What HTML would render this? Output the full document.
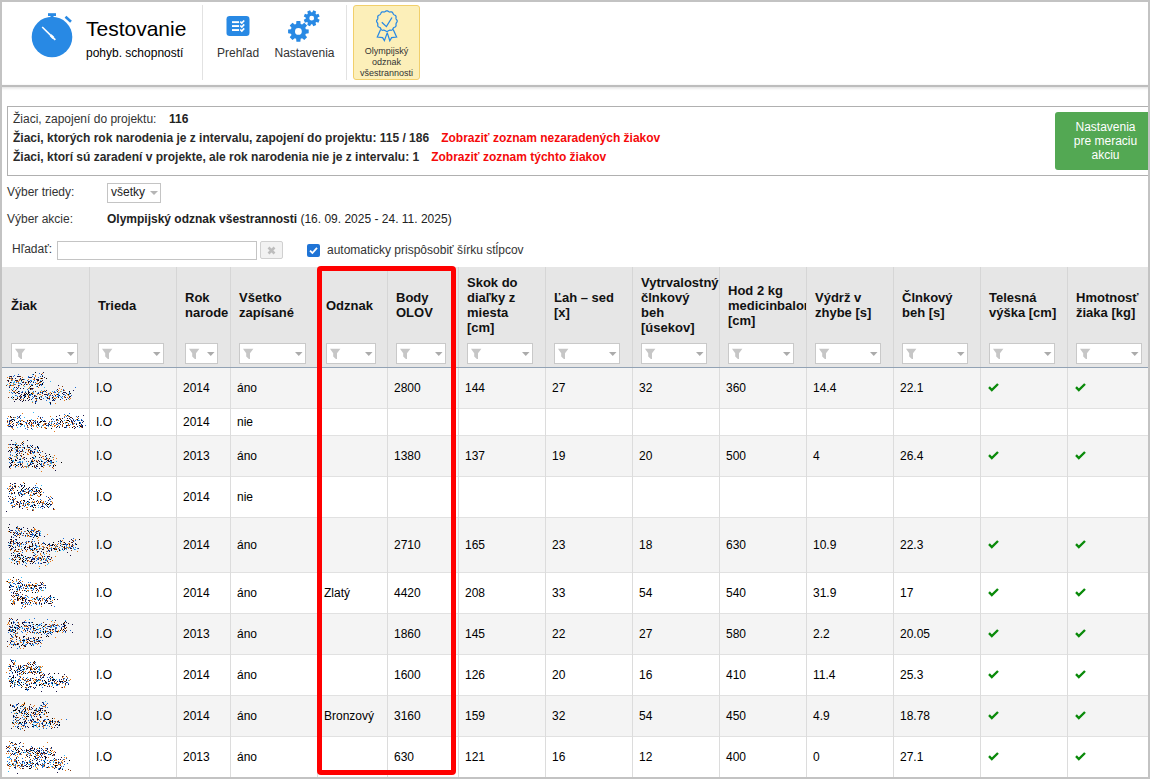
<!DOCTYPE html><html><head><meta charset="utf-8"><style>
*{box-sizing:border-box}
html,body{margin:0;padding:0;width:1150px;height:779px;overflow:hidden;background:#fff;font-family:"Liberation Sans", sans-serif;color:#333}
.a{position:absolute}
.t{position:absolute;white-space:nowrap}
</style></head><body>
<div class="a" style="left:0;top:0;width:1150px;height:85px;background:#fff"></div>
<div class="a" style="left:0;top:85px;width:1150px;height:2px;background:#bdbdbd;box-shadow:0 1px 3px rgba(0,0,0,0.18)"></div>
<svg class="a" style="left:28px;top:10px" width="50" height="50" viewBox="0 0 50 50">
<circle cx="24" cy="27" r="20.3" fill="#2889e4"/>
<rect x="20" y="3.2" width="8" height="2.8" fill="#2889e4"/>
<rect x="22.5" y="4" width="3" height="3" fill="#2889e4"/>
<path d="M37.5 6.8 L43 11.8" stroke="#2889e4" stroke-width="2.6"/>
<path d="M14.2 17 L25 27.6" stroke="#fff" stroke-width="1.6" stroke-linecap="butt"/>
<path d="M22.6 25.2 L25.4 28" stroke="#fff" stroke-width="2.6"/><path d="M25 27.6 L27.3 29.8" stroke="#fff" stroke-width="1.8"/>
</svg>
<div class="t" style="left:86px;top:16px;font-size:21px;color:#000;line-height:26px">Testovanie</div>
<div class="t" style="left:86px;top:45px;font-size:12px;color:#000;line-height:16px">pohyb. schopností</div>
<div class="a" style="left:202px;top:5px;width:1px;height:75px;background:#e2e2e2"></div>
<div class="a" style="left:346px;top:5px;width:1px;height:75px;background:#e2e2e2"></div>
<svg class="a" style="left:226px;top:16px" width="24" height="20" viewBox="0 0 24 20">
<rect x="0.5" y="0" width="23" height="20" rx="3.2" fill="#2889e4"/>
<rect x="6" y="5.2" width="7" height="1.9" fill="#fff"/>
<rect x="6" y="9.1" width="7" height="1.9" fill="#fff"/>
<rect x="6" y="13.1" width="7" height="1.9" fill="#fff"/>
<path d="M14.2 5.6l1.6 1.5 2.4-2.6 M14.2 9.5l1.6 1.5 2.4-2.6 M14.2 13.5l1.6 1.5 2.4-2.6" stroke="#fff" stroke-width="1.7" fill="none"/>
</svg>
<div class="t" style="left:217px;top:45px;font-size:12px;color:#333;line-height:16px">Prehľad</div>
<svg class="a" style="left:288px;top:9px" width="34" height="34" viewBox="0 0 34 34"><path fill-rule="evenodd" d="M17.86 20.14L20.71 20.43L20.71 24.37L17.86 24.66L17.28 26.08L19.08 28.30L16.30 31.08L14.08 29.28L12.66 29.86L12.37 32.71L8.43 32.71L8.14 29.86L6.72 29.28L4.50 31.08L1.72 28.30L3.52 26.08L2.94 24.66L0.09 24.37L0.09 20.43L2.94 20.14L3.52 18.72L1.72 16.50L4.50 13.72L6.72 15.52L8.14 14.94L8.43 12.09L12.37 12.09L12.66 14.94L14.08 15.52L16.30 13.72L19.08 16.50L17.28 18.72ZM13.80 22.40A3.4 3.4 0 1 0 7.00 22.40A3.4 3.4 0 1 0 13.80 22.40ZM29.67 9.79L31.63 10.84L30.47 13.65L28.34 13.01L27.51 13.84L28.15 15.97L25.34 17.13L24.29 15.17L23.11 15.17L22.06 17.13L19.25 15.97L19.89 13.84L19.06 13.01L16.93 13.65L15.77 10.84L17.73 9.79L17.73 8.61L15.77 7.56L16.93 4.75L19.06 5.39L19.89 4.56L19.25 2.43L22.06 1.27L23.11 3.23L24.29 3.23L25.34 1.27L28.15 2.43L27.51 4.56L28.34 5.39L30.47 4.75L31.63 7.56L29.67 8.61ZM26.10 9.20A2.4 2.4 0 1 0 21.30 9.20A2.4 2.4 0 1 0 26.10 9.20Z" fill="#2889e4"/></svg>
<div class="t" style="left:274.5px;top:45px;font-size:12px;color:#333;line-height:16px">Nastavenia</div>
<div class="a" style="left:353px;top:5px;width:67px;height:75px;background:#fcefb9;border:1px solid #f1cf6b;border-radius:3px"></div>
<svg class="a" style="left:372px;top:6px" width="30" height="38" viewBox="0 0 30 38">
<path d="M14.90 4.78L15.44 4.87L15.95 5.13L16.43 5.45L16.89 5.75L17.35 5.94L17.85 6.01L18.40 5.98L18.98 5.94L19.55 5.98L20.06 6.16L20.48 6.51L20.80 6.99L21.05 7.51L21.30 8.00L21.60 8.40L22.00 8.70L22.49 8.95L23.01 9.20L23.49 9.52L23.84 9.94L24.02 10.45L24.06 11.02L24.02 11.60L23.99 12.15L24.06 12.65L24.25 13.11L24.55 13.57L24.87 14.05L25.13 14.56L25.22 15.10L25.13 15.64L24.87 16.15L24.55 16.63L24.25 17.09L24.06 17.55L23.99 18.05L24.02 18.60L24.06 19.18L24.02 19.75L23.84 20.26L23.49 20.68L23.01 21.00L22.49 21.25L22.00 21.50L21.60 21.80L21.30 22.20L21.05 22.69L20.80 23.21L20.48 23.69L20.06 24.04L19.55 24.22L18.98 24.26L18.40 24.22L17.85 24.19L17.35 24.26L16.89 24.45L16.43 24.75L15.95 25.07L15.44 25.33L14.90 25.42L14.36 25.33L13.85 25.07L13.37 24.75L12.91 24.45L12.45 24.26L11.95 24.19L11.40 24.22L10.82 24.26L10.25 24.22L9.74 24.04L9.32 23.69L9.00 23.21L8.75 22.69L8.50 22.20L8.20 21.80L7.80 21.50L7.31 21.25L6.79 21.00L6.31 20.68L5.96 20.26L5.78 19.75L5.74 19.18L5.78 18.60L5.81 18.05L5.74 17.55L5.55 17.09L5.25 16.63L4.93 16.15L4.67 15.64L4.58 15.10L4.67 14.56L4.93 14.05L5.25 13.57L5.55 13.11L5.74 12.65L5.81 12.15L5.78 11.60L5.74 11.02L5.78 10.45L5.96 9.94L6.31 9.52L6.79 9.20L7.31 8.95L7.80 8.70L8.20 8.40L8.50 8.00L8.75 7.51L9.00 6.99L9.32 6.51L9.74 6.16L10.25 5.98L10.82 5.94L11.40 5.98L11.95 6.01L12.45 5.94L12.91 5.75L13.37 5.45L13.85 5.13L14.36 4.87L14.90 4.78Z" fill="none" stroke="#2889e4" stroke-width="1.25"/>
<path d="M9.8 16.3 L14.4 20.6 L20 11.5" fill="none" stroke="#2889e4" stroke-width="1.3"/>
<path d="M8.6 23.6 L5.3 31 L10.6 31.6 L12.4 34.6 L15.4 26.4 M21.2 23.6 L24.6 31 L19.6 31.6 L17.8 34.8 L15.2 26.6" fill="none" stroke="#2889e4" stroke-width="1.25" stroke-linejoin="miter"/>
</svg>
<div class="t" style="left:353px;top:46.3px;width:67px;text-align:center;font-size:9px;line-height:10.8px;color:#333;white-space:normal">Olympijský<br>odznak<br>všestrannosti</div>
<div class="a" style="left:7px;top:106px;width:1160px;height:70px;border:1px solid #b0b0b0"></div>
<div class="t" style="left:13px;top:110px;font-size:12px;line-height:19px;color:#333">Žiaci, zapojení do projektu:</div>
<div class="t" style="left:169px;top:110px;font-size:12px;line-height:19px;color:#222;font-weight:bold">116</div>
<div class="t" style="left:13px;top:129px;font-size:12px;line-height:19px;color:#2a2a2a;font-weight:bold">Žiaci, ktorých rok narodenia je z intervalu, zapojení do projektu: 115 / 186<span style="color:#f50a0a;margin-left:12px">Zobraziť zoznam nezaradených žiakov</span></div>
<div class="t" style="left:13px;top:148px;font-size:12px;line-height:19px;color:#2a2a2a;font-weight:bold">Žiaci, ktorí sú zaradení v projekte, ale rok narodenia nie je z intervalu: 1<span style="color:#f50a0a;margin-left:12px">Zobraziť zoznam týchto žiakov</span></div>
<div class="a" style="left:1055px;top:112px;width:101px;height:58px;background:#53a853;border-radius:3px"></div>
<div class="t" style="left:1055px;top:119.8px;width:101px;text-align:center;font-size:12px;line-height:14px;color:#fff">Nastavenia<br>pre meraciu<br>akciu</div>
<div class="t" style="left:7px;top:184px;font-size:12px;line-height:16px;color:#333">Výber triedy:</div>
<div class="a" style="left:107px;top:183px;width:54px;height:20px;border:1px solid #c4c4c4;background:#fff"></div>
<div class="t" style="left:111px;top:184px;font-size:12px;line-height:16px;color:#222">všetky</div>
<svg class="a" style="left:150px;top:191px" width="9" height="5"><path d="M0 0H8L4 4Z" fill="#b5b5b5"/></svg>
<div class="t" style="left:7px;top:211px;font-size:12px;line-height:16px;color:#333">Výber akcie:</div>
<div class="t" style="left:107px;top:211px;font-size:12px;line-height:16px;color:#222"><b>Olympijský odznak všestrannosti</b> (16. 09. 2025 - 24. 11. 2025)</div>
<div class="t" style="left:12px;top:241px;font-size:12px;line-height:16px;color:#333">Hľadať:</div>
<div class="a" style="left:57px;top:241px;width:200px;height:19px;border:1px solid #c4c4c4;background:#fff"></div>
<div class="a" style="left:260px;top:241px;width:23px;height:18px;border:1px solid #d0d0d0;background:#f2f2f2;border-radius:2px"></div>
<svg class="a" style="left:267px;top:246px" width="9" height="9"><path d="M1.5 1.5L7.5 7.5M7.5 1.5L1.5 7.5" stroke="#bdbdbd" stroke-width="2.6"/></svg>
<svg class="a" style="left:307px;top:244px" width="13" height="13"><rect width="13" height="13" rx="2" fill="#1f74d6"/><path d="M3 6.6L5.4 9L10 3.8" stroke="#fff" stroke-width="1.8" fill="none"/></svg>
<div class="t" style="left:327px;top:242px;font-size:12px;line-height:16px;color:#333">automaticky prispôsobiť šírku stĺpcov</div>
<div class="a" style="left:0;top:267px;width:1150px;height:100px;background:#e6e6e6"></div>
<div class="a" style="left:0;top:367px;width:1150px;height:1px;background:#92a2b4"></div>
<div class="a" style="left:0;top:368px;width:1150px;height:40px;background:#f4f4f4"></div>
<div class="a" style="left:0;top:408px;width:1150px;height:1px;background:#e1e1e1"></div>
<div class="a" style="left:0;top:409px;width:1150px;height:26px;background:#ffffff"></div>
<div class="a" style="left:0;top:435px;width:1150px;height:1px;background:#e1e1e1"></div>
<div class="a" style="left:0;top:436px;width:1150px;height:40px;background:#f4f4f4"></div>
<div class="a" style="left:0;top:476px;width:1150px;height:1px;background:#e1e1e1"></div>
<div class="a" style="left:0;top:477px;width:1150px;height:40px;background:#ffffff"></div>
<div class="a" style="left:0;top:517px;width:1150px;height:1px;background:#e1e1e1"></div>
<div class="a" style="left:0;top:518px;width:1150px;height:54px;background:#f4f4f4"></div>
<div class="a" style="left:0;top:572px;width:1150px;height:1px;background:#e1e1e1"></div>
<div class="a" style="left:0;top:573px;width:1150px;height:40px;background:#ffffff"></div>
<div class="a" style="left:0;top:613px;width:1150px;height:1px;background:#e1e1e1"></div>
<div class="a" style="left:0;top:614px;width:1150px;height:40px;background:#f4f4f4"></div>
<div class="a" style="left:0;top:654px;width:1150px;height:1px;background:#e1e1e1"></div>
<div class="a" style="left:0;top:655px;width:1150px;height:40px;background:#ffffff"></div>
<div class="a" style="left:0;top:695px;width:1150px;height:1px;background:#e1e1e1"></div>
<div class="a" style="left:0;top:696px;width:1150px;height:40px;background:#f4f4f4"></div>
<div class="a" style="left:0;top:736px;width:1150px;height:1px;background:#e1e1e1"></div>
<div class="a" style="left:0;top:737px;width:1150px;height:40px;background:#ffffff"></div>
<div class="a" style="left:89px;top:267px;width:1px;height:100px;background:#d6d6d6"></div>
<div class="a" style="left:89px;top:368px;width:1px;height:411px;background:#dcdcdc"></div>
<div class="a" style="left:176px;top:267px;width:1px;height:100px;background:#d6d6d6"></div>
<div class="a" style="left:176px;top:368px;width:1px;height:411px;background:#dcdcdc"></div>
<div class="a" style="left:230px;top:267px;width:1px;height:100px;background:#d6d6d6"></div>
<div class="a" style="left:230px;top:368px;width:1px;height:411px;background:#dcdcdc"></div>
<div class="a" style="left:317px;top:267px;width:1px;height:100px;background:#d6d6d6"></div>
<div class="a" style="left:317px;top:368px;width:1px;height:411px;background:#dcdcdc"></div>
<div class="a" style="left:387px;top:267px;width:1px;height:100px;background:#d6d6d6"></div>
<div class="a" style="left:387px;top:368px;width:1px;height:411px;background:#dcdcdc"></div>
<div class="a" style="left:458px;top:267px;width:1px;height:100px;background:#d6d6d6"></div>
<div class="a" style="left:458px;top:368px;width:1px;height:411px;background:#dcdcdc"></div>
<div class="a" style="left:545px;top:267px;width:1px;height:100px;background:#d6d6d6"></div>
<div class="a" style="left:545px;top:368px;width:1px;height:411px;background:#dcdcdc"></div>
<div class="a" style="left:632px;top:267px;width:1px;height:100px;background:#d6d6d6"></div>
<div class="a" style="left:632px;top:368px;width:1px;height:411px;background:#dcdcdc"></div>
<div class="a" style="left:719px;top:267px;width:1px;height:100px;background:#d6d6d6"></div>
<div class="a" style="left:719px;top:368px;width:1px;height:411px;background:#dcdcdc"></div>
<div class="a" style="left:806px;top:267px;width:1px;height:100px;background:#d6d6d6"></div>
<div class="a" style="left:806px;top:368px;width:1px;height:411px;background:#dcdcdc"></div>
<div class="a" style="left:893px;top:267px;width:1px;height:100px;background:#d6d6d6"></div>
<div class="a" style="left:893px;top:368px;width:1px;height:411px;background:#dcdcdc"></div>
<div class="a" style="left:980px;top:267px;width:1px;height:100px;background:#d6d6d6"></div>
<div class="a" style="left:980px;top:368px;width:1px;height:411px;background:#dcdcdc"></div>
<div class="a" style="left:1067px;top:267px;width:1px;height:100px;background:#d6d6d6"></div>
<div class="a" style="left:1067px;top:368px;width:1px;height:411px;background:#dcdcdc"></div>
<div class="a" style="left:2px;top:267px;width:87px;height:100px;overflow:hidden"><div class="t" style="left:9px;top:30.5px;font-size:13px;line-height:15px;font-weight:bold;color:#111">Žiak</div></div>
<div class="a" style="left:11px;top:343px;width:67px;height:21px;border:1px solid #c9c9c9;background:#fff"></div>
<svg style="position:absolute;left:15px;top:348px" width="11" height="12" viewBox="0 0 11 12"><path d="M0 0.8H10.4L7 5.2V11H5.9L3.2 8.4V5.2Z" fill="#c6c6c6"/></svg>
<svg class="a" style="left:67px;top:352px" width="8" height="5"><path d="M0 0H7.5L3.75 4Z" fill="#ababab"/></svg>
<div class="a" style="left:90px;top:267px;width:86px;height:100px;overflow:hidden"><div class="t" style="left:8px;top:30.5px;font-size:13px;line-height:15px;font-weight:bold;color:#111">Trieda</div></div>
<div class="a" style="left:98px;top:343px;width:66px;height:21px;border:1px solid #c9c9c9;background:#fff"></div>
<svg style="position:absolute;left:102px;top:348px" width="11" height="12" viewBox="0 0 11 12"><path d="M0 0.8H10.4L7 5.2V11H5.9L3.2 8.4V5.2Z" fill="#c6c6c6"/></svg>
<svg class="a" style="left:153px;top:352px" width="8" height="5"><path d="M0 0H7.5L3.75 4Z" fill="#ababab"/></svg>
<div class="a" style="left:177px;top:267px;width:53px;height:100px;overflow:hidden"><div class="t" style="left:8px;top:23.0px;font-size:13px;line-height:15px;font-weight:bold;color:#111">Rok<br>narode</div></div>
<div class="a" style="left:185px;top:343px;width:33px;height:21px;border:1px solid #c9c9c9;background:#fff"></div>
<svg style="position:absolute;left:189px;top:348px" width="11" height="12" viewBox="0 0 11 12"><path d="M0 0.8H10.4L7 5.2V11H5.9L3.2 8.4V5.2Z" fill="#c6c6c6"/></svg>
<svg class="a" style="left:207px;top:352px" width="8" height="5"><path d="M0 0H7.5L3.75 4Z" fill="#ababab"/></svg>
<div class="a" style="left:231px;top:267px;width:86px;height:100px;overflow:hidden"><div class="t" style="left:8px;top:23.0px;font-size:13px;line-height:15px;font-weight:bold;color:#111">Všetko<br>zapísané</div></div>
<div class="a" style="left:239px;top:343px;width:67px;height:21px;border:1px solid #c9c9c9;background:#fff"></div>
<svg style="position:absolute;left:243px;top:348px" width="11" height="12" viewBox="0 0 11 12"><path d="M0 0.8H10.4L7 5.2V11H5.9L3.2 8.4V5.2Z" fill="#c6c6c6"/></svg>
<svg class="a" style="left:295px;top:352px" width="8" height="5"><path d="M0 0H7.5L3.75 4Z" fill="#ababab"/></svg>
<div class="a" style="left:318px;top:267px;width:69px;height:100px;overflow:hidden"><div class="t" style="left:8px;top:30.5px;font-size:13px;line-height:15px;font-weight:bold;color:#111">Odznak</div></div>
<div class="a" style="left:326px;top:343px;width:50px;height:21px;border:1px solid #c9c9c9;background:#fff"></div>
<svg style="position:absolute;left:330px;top:348px" width="11" height="12" viewBox="0 0 11 12"><path d="M0 0.8H10.4L7 5.2V11H5.9L3.2 8.4V5.2Z" fill="#c6c6c6"/></svg>
<svg class="a" style="left:365px;top:352px" width="8" height="5"><path d="M0 0H7.5L3.75 4Z" fill="#ababab"/></svg>
<div class="a" style="left:388px;top:267px;width:70px;height:100px;overflow:hidden"><div class="t" style="left:8px;top:23.0px;font-size:13px;line-height:15px;font-weight:bold;color:#111">Body<br>OLOV</div></div>
<div class="a" style="left:396px;top:343px;width:50px;height:21px;border:1px solid #c9c9c9;background:#fff"></div>
<svg style="position:absolute;left:400px;top:348px" width="11" height="12" viewBox="0 0 11 12"><path d="M0 0.8H10.4L7 5.2V11H5.9L3.2 8.4V5.2Z" fill="#c6c6c6"/></svg>
<svg class="a" style="left:435px;top:352px" width="8" height="5"><path d="M0 0H7.5L3.75 4Z" fill="#ababab"/></svg>
<div class="a" style="left:459px;top:267px;width:86px;height:100px;overflow:hidden"><div class="t" style="left:8px;top:8.0px;font-size:13px;line-height:15px;font-weight:bold;color:#111">Skok do<br>diaľky z<br>miesta<br>[cm]</div></div>
<div class="a" style="left:467px;top:343px;width:66px;height:21px;border:1px solid #c9c9c9;background:#fff"></div>
<svg style="position:absolute;left:471px;top:348px" width="11" height="12" viewBox="0 0 11 12"><path d="M0 0.8H10.4L7 5.2V11H5.9L3.2 8.4V5.2Z" fill="#c6c6c6"/></svg>
<svg class="a" style="left:522px;top:352px" width="8" height="5"><path d="M0 0H7.5L3.75 4Z" fill="#ababab"/></svg>
<div class="a" style="left:546px;top:267px;width:86px;height:100px;overflow:hidden"><div class="t" style="left:8px;top:23.0px;font-size:13px;line-height:15px;font-weight:bold;color:#111">Ľah – sed<br>[x]</div></div>
<div class="a" style="left:554px;top:343px;width:66px;height:21px;border:1px solid #c9c9c9;background:#fff"></div>
<svg style="position:absolute;left:558px;top:348px" width="11" height="12" viewBox="0 0 11 12"><path d="M0 0.8H10.4L7 5.2V11H5.9L3.2 8.4V5.2Z" fill="#c6c6c6"/></svg>
<svg class="a" style="left:609px;top:352px" width="8" height="5"><path d="M0 0H7.5L3.75 4Z" fill="#ababab"/></svg>
<div class="a" style="left:633px;top:267px;width:86px;height:100px;overflow:hidden"><div class="t" style="left:8px;top:8.0px;font-size:13px;line-height:15px;font-weight:bold;color:#111">Vytrvalostný<br>člnkový<br>beh<br>[úsekov]</div></div>
<div class="a" style="left:641px;top:343px;width:66px;height:21px;border:1px solid #c9c9c9;background:#fff"></div>
<svg style="position:absolute;left:645px;top:348px" width="11" height="12" viewBox="0 0 11 12"><path d="M0 0.8H10.4L7 5.2V11H5.9L3.2 8.4V5.2Z" fill="#c6c6c6"/></svg>
<svg class="a" style="left:696px;top:352px" width="8" height="5"><path d="M0 0H7.5L3.75 4Z" fill="#ababab"/></svg>
<div class="a" style="left:720px;top:267px;width:86px;height:100px;overflow:hidden"><div class="t" style="left:8px;top:15.5px;font-size:13px;line-height:15px;font-weight:bold;color:#111">Hod 2 kg<br>medicinbalom<br>[cm]</div></div>
<div class="a" style="left:728px;top:343px;width:66px;height:21px;border:1px solid #c9c9c9;background:#fff"></div>
<svg style="position:absolute;left:732px;top:348px" width="11" height="12" viewBox="0 0 11 12"><path d="M0 0.8H10.4L7 5.2V11H5.9L3.2 8.4V5.2Z" fill="#c6c6c6"/></svg>
<svg class="a" style="left:783px;top:352px" width="8" height="5"><path d="M0 0H7.5L3.75 4Z" fill="#ababab"/></svg>
<div class="a" style="left:807px;top:267px;width:86px;height:100px;overflow:hidden"><div class="t" style="left:8px;top:23.0px;font-size:13px;line-height:15px;font-weight:bold;color:#111">Výdrž v<br>zhybe [s]</div></div>
<div class="a" style="left:815px;top:343px;width:66px;height:21px;border:1px solid #c9c9c9;background:#fff"></div>
<svg style="position:absolute;left:819px;top:348px" width="11" height="12" viewBox="0 0 11 12"><path d="M0 0.8H10.4L7 5.2V11H5.9L3.2 8.4V5.2Z" fill="#c6c6c6"/></svg>
<svg class="a" style="left:870px;top:352px" width="8" height="5"><path d="M0 0H7.5L3.75 4Z" fill="#ababab"/></svg>
<div class="a" style="left:894px;top:267px;width:86px;height:100px;overflow:hidden"><div class="t" style="left:8px;top:23.0px;font-size:13px;line-height:15px;font-weight:bold;color:#111">Člnkový<br>beh [s]</div></div>
<div class="a" style="left:902px;top:343px;width:66px;height:21px;border:1px solid #c9c9c9;background:#fff"></div>
<svg style="position:absolute;left:906px;top:348px" width="11" height="12" viewBox="0 0 11 12"><path d="M0 0.8H10.4L7 5.2V11H5.9L3.2 8.4V5.2Z" fill="#c6c6c6"/></svg>
<svg class="a" style="left:957px;top:352px" width="8" height="5"><path d="M0 0H7.5L3.75 4Z" fill="#ababab"/></svg>
<div class="a" style="left:981px;top:267px;width:86px;height:100px;overflow:hidden"><div class="t" style="left:8px;top:23.0px;font-size:13px;line-height:15px;font-weight:bold;color:#111">Telesná<br>výška [cm]</div></div>
<div class="a" style="left:989px;top:343px;width:66px;height:21px;border:1px solid #c9c9c9;background:#fff"></div>
<svg style="position:absolute;left:993px;top:348px" width="11" height="12" viewBox="0 0 11 12"><path d="M0 0.8H10.4L7 5.2V11H5.9L3.2 8.4V5.2Z" fill="#c6c6c6"/></svg>
<svg class="a" style="left:1044px;top:352px" width="8" height="5"><path d="M0 0H7.5L3.75 4Z" fill="#ababab"/></svg>
<div class="a" style="left:1068px;top:267px;width:86px;height:100px;overflow:hidden"><div class="t" style="left:8px;top:23.0px;font-size:13px;line-height:15px;font-weight:bold;color:#111">Hmotnosť<br>žiaka [kg]</div></div>
<div class="a" style="left:1076px;top:343px;width:66px;height:21px;border:1px solid #c9c9c9;background:#fff"></div>
<svg style="position:absolute;left:1080px;top:348px" width="11" height="12" viewBox="0 0 11 12"><path d="M0 0.8H10.4L7 5.2V11H5.9L3.2 8.4V5.2Z" fill="#c6c6c6"/></svg>
<svg class="a" style="left:1131px;top:352px" width="8" height="5"><path d="M0 0H7.5L3.75 4Z" fill="#ababab"/></svg>
<div class="t" style="left:96px;top:380.0px;font-size:12px;line-height:16px;color:#000">I.O</div>
<div class="t" style="left:183px;top:380.0px;font-size:12px;line-height:16px;color:#000">2014</div>
<div class="t" style="left:237px;top:380.0px;font-size:12px;line-height:16px;color:#000">áno</div>
<div class="t" style="left:394px;top:380.0px;font-size:12px;line-height:16px;color:#000">2800</div>
<div class="t" style="left:465px;top:380.0px;font-size:12px;line-height:16px;color:#000">144</div>
<div class="t" style="left:552px;top:380.0px;font-size:12px;line-height:16px;color:#000">27</div>
<div class="t" style="left:639px;top:380.0px;font-size:12px;line-height:16px;color:#000">32</div>
<div class="t" style="left:726px;top:380.0px;font-size:12px;line-height:16px;color:#000">360</div>
<div class="t" style="left:813px;top:380.0px;font-size:12px;line-height:16px;color:#000">14.4</div>
<div class="t" style="left:900px;top:380.0px;font-size:12px;line-height:16px;color:#000">22.1</div>
<svg class="a" style="left:988px;top:382.8px" width="11" height="9" viewBox="0 0 11 9"><path d="M1 4.2L3.8 7L10 1" stroke="#0a8a0a" stroke-width="2.4" fill="none"/></svg>
<svg class="a" style="left:1075px;top:382.8px" width="11" height="9" viewBox="0 0 11 9"><path d="M1 4.2L3.8 7L10 1" stroke="#0a8a0a" stroke-width="2.4" fill="none"/></svg>
<div class="t" style="left:96px;top:414.0px;font-size:12px;line-height:16px;color:#000">I.O</div>
<div class="t" style="left:183px;top:414.0px;font-size:12px;line-height:16px;color:#000">2014</div>
<div class="t" style="left:237px;top:414.0px;font-size:12px;line-height:16px;color:#000">nie</div>
<div class="t" style="left:96px;top:448.0px;font-size:12px;line-height:16px;color:#000">I.O</div>
<div class="t" style="left:183px;top:448.0px;font-size:12px;line-height:16px;color:#000">2013</div>
<div class="t" style="left:237px;top:448.0px;font-size:12px;line-height:16px;color:#000">áno</div>
<div class="t" style="left:394px;top:448.0px;font-size:12px;line-height:16px;color:#000">1380</div>
<div class="t" style="left:465px;top:448.0px;font-size:12px;line-height:16px;color:#000">137</div>
<div class="t" style="left:552px;top:448.0px;font-size:12px;line-height:16px;color:#000">19</div>
<div class="t" style="left:639px;top:448.0px;font-size:12px;line-height:16px;color:#000">20</div>
<div class="t" style="left:726px;top:448.0px;font-size:12px;line-height:16px;color:#000">500</div>
<div class="t" style="left:813px;top:448.0px;font-size:12px;line-height:16px;color:#000">4</div>
<div class="t" style="left:900px;top:448.0px;font-size:12px;line-height:16px;color:#000">26.4</div>
<svg class="a" style="left:988px;top:450.8px" width="11" height="9" viewBox="0 0 11 9"><path d="M1 4.2L3.8 7L10 1" stroke="#0a8a0a" stroke-width="2.4" fill="none"/></svg>
<svg class="a" style="left:1075px;top:450.8px" width="11" height="9" viewBox="0 0 11 9"><path d="M1 4.2L3.8 7L10 1" stroke="#0a8a0a" stroke-width="2.4" fill="none"/></svg>
<div class="t" style="left:96px;top:489.0px;font-size:12px;line-height:16px;color:#000">I.O</div>
<div class="t" style="left:183px;top:489.0px;font-size:12px;line-height:16px;color:#000">2014</div>
<div class="t" style="left:237px;top:489.0px;font-size:12px;line-height:16px;color:#000">nie</div>
<div class="t" style="left:96px;top:537.0px;font-size:12px;line-height:16px;color:#000">I.O</div>
<div class="t" style="left:183px;top:537.0px;font-size:12px;line-height:16px;color:#000">2014</div>
<div class="t" style="left:237px;top:537.0px;font-size:12px;line-height:16px;color:#000">áno</div>
<div class="t" style="left:394px;top:537.0px;font-size:12px;line-height:16px;color:#000">2710</div>
<div class="t" style="left:465px;top:537.0px;font-size:12px;line-height:16px;color:#000">165</div>
<div class="t" style="left:552px;top:537.0px;font-size:12px;line-height:16px;color:#000">23</div>
<div class="t" style="left:639px;top:537.0px;font-size:12px;line-height:16px;color:#000">18</div>
<div class="t" style="left:726px;top:537.0px;font-size:12px;line-height:16px;color:#000">630</div>
<div class="t" style="left:813px;top:537.0px;font-size:12px;line-height:16px;color:#000">10.9</div>
<div class="t" style="left:900px;top:537.0px;font-size:12px;line-height:16px;color:#000">22.3</div>
<svg class="a" style="left:988px;top:539.8px" width="11" height="9" viewBox="0 0 11 9"><path d="M1 4.2L3.8 7L10 1" stroke="#0a8a0a" stroke-width="2.4" fill="none"/></svg>
<svg class="a" style="left:1075px;top:539.8px" width="11" height="9" viewBox="0 0 11 9"><path d="M1 4.2L3.8 7L10 1" stroke="#0a8a0a" stroke-width="2.4" fill="none"/></svg>
<div class="t" style="left:96px;top:585.0px;font-size:12px;line-height:16px;color:#000">I.O</div>
<div class="t" style="left:183px;top:585.0px;font-size:12px;line-height:16px;color:#000">2014</div>
<div class="t" style="left:237px;top:585.0px;font-size:12px;line-height:16px;color:#000">áno</div>
<div class="t" style="left:324px;top:585.0px;font-size:12px;line-height:16px;color:#000">Zlatý</div>
<div class="t" style="left:394px;top:585.0px;font-size:12px;line-height:16px;color:#000">4420</div>
<div class="t" style="left:465px;top:585.0px;font-size:12px;line-height:16px;color:#000">208</div>
<div class="t" style="left:552px;top:585.0px;font-size:12px;line-height:16px;color:#000">33</div>
<div class="t" style="left:639px;top:585.0px;font-size:12px;line-height:16px;color:#000">54</div>
<div class="t" style="left:726px;top:585.0px;font-size:12px;line-height:16px;color:#000">540</div>
<div class="t" style="left:813px;top:585.0px;font-size:12px;line-height:16px;color:#000">31.9</div>
<div class="t" style="left:900px;top:585.0px;font-size:12px;line-height:16px;color:#000">17</div>
<svg class="a" style="left:988px;top:587.8px" width="11" height="9" viewBox="0 0 11 9"><path d="M1 4.2L3.8 7L10 1" stroke="#0a8a0a" stroke-width="2.4" fill="none"/></svg>
<svg class="a" style="left:1075px;top:587.8px" width="11" height="9" viewBox="0 0 11 9"><path d="M1 4.2L3.8 7L10 1" stroke="#0a8a0a" stroke-width="2.4" fill="none"/></svg>
<div class="t" style="left:96px;top:626.0px;font-size:12px;line-height:16px;color:#000">I.O</div>
<div class="t" style="left:183px;top:626.0px;font-size:12px;line-height:16px;color:#000">2013</div>
<div class="t" style="left:237px;top:626.0px;font-size:12px;line-height:16px;color:#000">áno</div>
<div class="t" style="left:394px;top:626.0px;font-size:12px;line-height:16px;color:#000">1860</div>
<div class="t" style="left:465px;top:626.0px;font-size:12px;line-height:16px;color:#000">145</div>
<div class="t" style="left:552px;top:626.0px;font-size:12px;line-height:16px;color:#000">22</div>
<div class="t" style="left:639px;top:626.0px;font-size:12px;line-height:16px;color:#000">27</div>
<div class="t" style="left:726px;top:626.0px;font-size:12px;line-height:16px;color:#000">580</div>
<div class="t" style="left:813px;top:626.0px;font-size:12px;line-height:16px;color:#000">2.2</div>
<div class="t" style="left:900px;top:626.0px;font-size:12px;line-height:16px;color:#000">20.05</div>
<svg class="a" style="left:988px;top:628.8px" width="11" height="9" viewBox="0 0 11 9"><path d="M1 4.2L3.8 7L10 1" stroke="#0a8a0a" stroke-width="2.4" fill="none"/></svg>
<svg class="a" style="left:1075px;top:628.8px" width="11" height="9" viewBox="0 0 11 9"><path d="M1 4.2L3.8 7L10 1" stroke="#0a8a0a" stroke-width="2.4" fill="none"/></svg>
<div class="t" style="left:96px;top:667.0px;font-size:12px;line-height:16px;color:#000">I.O</div>
<div class="t" style="left:183px;top:667.0px;font-size:12px;line-height:16px;color:#000">2014</div>
<div class="t" style="left:237px;top:667.0px;font-size:12px;line-height:16px;color:#000">áno</div>
<div class="t" style="left:394px;top:667.0px;font-size:12px;line-height:16px;color:#000">1600</div>
<div class="t" style="left:465px;top:667.0px;font-size:12px;line-height:16px;color:#000">126</div>
<div class="t" style="left:552px;top:667.0px;font-size:12px;line-height:16px;color:#000">20</div>
<div class="t" style="left:639px;top:667.0px;font-size:12px;line-height:16px;color:#000">16</div>
<div class="t" style="left:726px;top:667.0px;font-size:12px;line-height:16px;color:#000">410</div>
<div class="t" style="left:813px;top:667.0px;font-size:12px;line-height:16px;color:#000">11.4</div>
<div class="t" style="left:900px;top:667.0px;font-size:12px;line-height:16px;color:#000">25.3</div>
<svg class="a" style="left:988px;top:669.8px" width="11" height="9" viewBox="0 0 11 9"><path d="M1 4.2L3.8 7L10 1" stroke="#0a8a0a" stroke-width="2.4" fill="none"/></svg>
<svg class="a" style="left:1075px;top:669.8px" width="11" height="9" viewBox="0 0 11 9"><path d="M1 4.2L3.8 7L10 1" stroke="#0a8a0a" stroke-width="2.4" fill="none"/></svg>
<div class="t" style="left:96px;top:708.0px;font-size:12px;line-height:16px;color:#000">I.O</div>
<div class="t" style="left:183px;top:708.0px;font-size:12px;line-height:16px;color:#000">2014</div>
<div class="t" style="left:237px;top:708.0px;font-size:12px;line-height:16px;color:#000">áno</div>
<div class="t" style="left:324px;top:708.0px;font-size:12px;line-height:16px;color:#000">Bronzový</div>
<div class="t" style="left:394px;top:708.0px;font-size:12px;line-height:16px;color:#000">3160</div>
<div class="t" style="left:465px;top:708.0px;font-size:12px;line-height:16px;color:#000">159</div>
<div class="t" style="left:552px;top:708.0px;font-size:12px;line-height:16px;color:#000">32</div>
<div class="t" style="left:639px;top:708.0px;font-size:12px;line-height:16px;color:#000">54</div>
<div class="t" style="left:726px;top:708.0px;font-size:12px;line-height:16px;color:#000">450</div>
<div class="t" style="left:813px;top:708.0px;font-size:12px;line-height:16px;color:#000">4.9</div>
<div class="t" style="left:900px;top:708.0px;font-size:12px;line-height:16px;color:#000">18.78</div>
<svg class="a" style="left:988px;top:710.8px" width="11" height="9" viewBox="0 0 11 9"><path d="M1 4.2L3.8 7L10 1" stroke="#0a8a0a" stroke-width="2.4" fill="none"/></svg>
<svg class="a" style="left:1075px;top:710.8px" width="11" height="9" viewBox="0 0 11 9"><path d="M1 4.2L3.8 7L10 1" stroke="#0a8a0a" stroke-width="2.4" fill="none"/></svg>
<div class="t" style="left:96px;top:749.0px;font-size:12px;line-height:16px;color:#000">I.O</div>
<div class="t" style="left:183px;top:749.0px;font-size:12px;line-height:16px;color:#000">2013</div>
<div class="t" style="left:237px;top:749.0px;font-size:12px;line-height:16px;color:#000">áno</div>
<div class="t" style="left:394px;top:749.0px;font-size:12px;line-height:16px;color:#000">630</div>
<div class="t" style="left:465px;top:749.0px;font-size:12px;line-height:16px;color:#000">121</div>
<div class="t" style="left:552px;top:749.0px;font-size:12px;line-height:16px;color:#000">16</div>
<div class="t" style="left:639px;top:749.0px;font-size:12px;line-height:16px;color:#000">12</div>
<div class="t" style="left:726px;top:749.0px;font-size:12px;line-height:16px;color:#000">400</div>
<div class="t" style="left:813px;top:749.0px;font-size:12px;line-height:16px;color:#000">0</div>
<div class="t" style="left:900px;top:749.0px;font-size:12px;line-height:16px;color:#000">27.1</div>
<svg class="a" style="left:988px;top:751.8px" width="11" height="9" viewBox="0 0 11 9"><path d="M1 4.2L3.8 7L10 1" stroke="#0a8a0a" stroke-width="2.4" fill="none"/></svg>
<svg class="a" style="left:1075px;top:751.8px" width="11" height="9" viewBox="0 0 11 9"><path d="M1 4.2L3.8 7L10 1" stroke="#0a8a0a" stroke-width="2.4" fill="none"/></svg>
<svg width="1150" height="779" style="position:absolute;left:0;top:0" shape-rendering="crispEdges"><path fill="#1a1446" d="M6 511h1v1h-1zM6 746h1v1h-1zM6 748h1v1h-1zM7 421h1v1h-1zM7 422h1v1h-1zM7 641h1v1h-1zM7 747h1v1h-1zM7 751h1v1h-1zM8 380h1v1h-1zM8 381h1v1h-1zM8 447h1v1h-1zM8 451h1v1h-1zM8 496h1v1h-1zM8 542h1v1h-1zM8 630h1v1h-1zM8 765h1v1h-1zM9 387h1v1h-1zM9 421h1v1h-1zM9 423h1v1h-1zM9 426h1v1h-1zM9 462h1v1h-1zM9 467h1v1h-1zM9 498h1v1h-1zM9 524h1v1h-1zM9 529h1v1h-1zM9 531h1v1h-1zM9 543h1v1h-1zM9 547h1v1h-1zM9 586h1v1h-1zM9 620h1v1h-1zM9 621h1v1h-1zM9 624h1v1h-1zM9 626h1v1h-1zM9 629h1v1h-1zM9 666h1v1h-1zM9 676h1v1h-1zM9 680h1v1h-1zM9 681h1v1h-1zM9 764h1v1h-1zM10 376h1v1h-1zM10 385h1v1h-1zM10 420h1v1h-1zM10 425h1v1h-1zM10 444h1v1h-1zM10 458h1v1h-1zM10 463h1v1h-1zM10 483h1v1h-1zM10 489h1v1h-1zM10 490h1v1h-1zM10 532h1v1h-1zM10 539h1v1h-1zM10 541h1v1h-1zM10 543h1v1h-1zM10 546h1v1h-1zM10 589h1v1h-1zM10 627h1v1h-1zM10 631h1v1h-1zM10 634h1v1h-1zM10 638h1v1h-1zM10 642h1v1h-1zM10 665h1v1h-1zM10 666h1v1h-1zM10 670h1v1h-1zM10 681h1v1h-1zM10 683h1v1h-1zM10 685h1v1h-1zM10 766h1v1h-1zM11 376h1v1h-1zM11 377h1v1h-1zM11 397h1v1h-1zM11 417h1v1h-1zM11 419h1v1h-1zM11 420h1v1h-1zM11 426h1v1h-1zM11 427h1v1h-1zM11 440h1v1h-1zM11 447h1v1h-1zM11 449h1v1h-1zM11 450h1v1h-1zM11 462h1v1h-1zM11 464h1v1h-1zM11 488h1v1h-1zM11 492h1v1h-1zM11 502h1v1h-1zM11 530h1v1h-1zM11 536h1v1h-1zM11 537h1v1h-1zM11 541h1v1h-1zM11 548h1v1h-1zM11 549h1v1h-1zM11 553h1v1h-1zM11 555h1v1h-1zM11 586h1v1h-1zM11 595h1v1h-1zM11 627h1v1h-1zM11 631h1v1h-1zM11 635h1v1h-1zM11 647h1v1h-1zM11 660h1v1h-1zM11 661h1v1h-1zM11 669h1v1h-1zM11 678h1v1h-1zM11 680h1v1h-1zM11 682h1v1h-1zM11 728h1v1h-1zM11 754h1v1h-1zM12 378h1v1h-1zM12 390h1v1h-1zM12 393h1v1h-1zM12 424h1v1h-1zM12 426h1v1h-1zM12 444h1v1h-1zM12 448h1v1h-1zM12 450h1v1h-1zM12 460h1v1h-1zM12 461h1v1h-1zM12 484h1v1h-1zM12 487h1v1h-1zM12 488h1v1h-1zM12 493h1v1h-1zM12 497h1v1h-1zM12 499h1v1h-1zM12 530h1v1h-1zM12 558h1v1h-1zM12 559h1v1h-1zM12 580h1v1h-1zM12 589h1v1h-1zM12 604h1v1h-1zM12 619h1v1h-1zM12 625h1v1h-1zM12 644h1v1h-1zM12 662h1v1h-1zM12 666h1v1h-1zM12 672h1v1h-1zM12 706h1v1h-1zM12 751h1v1h-1zM12 753h1v1h-1zM13 383h1v1h-1zM13 385h1v1h-1zM13 419h1v1h-1zM13 425h1v1h-1zM13 444h1v1h-1zM13 490h1v1h-1zM13 500h1v1h-1zM13 501h1v1h-1zM13 532h1v1h-1zM13 540h1v1h-1zM13 541h1v1h-1zM13 542h1v1h-1zM13 547h1v1h-1zM13 552h1v1h-1zM13 586h1v1h-1zM13 592h1v1h-1zM13 593h1v1h-1zM13 597h1v1h-1zM13 622h1v1h-1zM13 663h1v1h-1zM13 666h1v1h-1zM13 675h1v1h-1zM13 676h1v1h-1zM13 705h1v1h-1zM13 715h1v1h-1zM13 723h1v1h-1zM13 749h1v1h-1zM13 754h1v1h-1zM14 382h1v1h-1zM14 384h1v1h-1zM14 387h1v1h-1zM14 392h1v1h-1zM14 401h1v1h-1zM14 483h1v1h-1zM14 486h1v1h-1zM14 493h1v1h-1zM14 506h1v1h-1zM14 533h1v1h-1zM14 543h1v1h-1zM14 557h1v1h-1zM14 560h1v1h-1zM14 591h1v1h-1zM14 596h1v1h-1zM14 603h1v1h-1zM14 632h1v1h-1zM14 686h1v1h-1zM14 707h1v1h-1zM14 747h1v1h-1zM14 753h1v1h-1zM14 761h1v1h-1zM14 767h1v1h-1zM15 378h1v1h-1zM15 380h1v1h-1zM15 393h1v1h-1zM15 444h1v1h-1zM15 445h1v1h-1zM15 459h1v1h-1zM15 466h1v1h-1zM15 483h1v1h-1zM15 535h1v1h-1zM15 539h1v1h-1zM15 546h1v1h-1zM15 547h1v1h-1zM15 549h1v1h-1zM15 555h1v1h-1zM15 556h1v1h-1zM15 593h1v1h-1zM15 595h1v1h-1zM15 624h1v1h-1zM15 627h1v1h-1zM15 628h1v1h-1zM15 630h1v1h-1zM15 635h1v1h-1zM15 636h1v1h-1zM15 644h1v1h-1zM15 645h1v1h-1zM15 671h1v1h-1zM15 672h1v1h-1zM15 677h1v1h-1zM15 709h1v1h-1zM15 717h1v1h-1zM15 743h1v1h-1zM15 749h1v1h-1zM15 753h1v1h-1zM15 764h1v1h-1zM15 767h1v1h-1zM16 380h1v1h-1zM16 382h1v1h-1zM16 387h1v1h-1zM16 389h1v1h-1zM16 392h1v1h-1zM16 395h1v1h-1zM16 399h1v1h-1zM16 422h1v1h-1zM16 425h1v1h-1zM16 449h1v1h-1zM16 450h1v1h-1zM16 455h1v1h-1zM16 503h1v1h-1zM16 531h1v1h-1zM16 533h1v1h-1zM16 536h1v1h-1zM16 539h1v1h-1zM16 542h1v1h-1zM16 561h1v1h-1zM16 587h1v1h-1zM16 636h1v1h-1zM16 637h1v1h-1zM16 639h1v1h-1zM16 641h1v1h-1zM16 670h1v1h-1zM16 715h1v1h-1zM16 723h1v1h-1zM16 744h1v1h-1zM16 752h1v1h-1zM16 758h1v1h-1zM16 762h1v1h-1zM17 376h1v1h-1zM17 380h1v1h-1zM17 388h1v1h-1zM17 448h1v1h-1zM17 450h1v1h-1zM17 451h1v1h-1zM17 453h1v1h-1zM17 455h1v1h-1zM17 458h1v1h-1zM17 465h1v1h-1zM17 501h1v1h-1zM17 502h1v1h-1zM17 504h1v1h-1zM17 528h1v1h-1zM17 532h1v1h-1zM17 535h1v1h-1zM17 542h1v1h-1zM17 543h1v1h-1zM17 544h1v1h-1zM17 545h1v1h-1zM17 554h1v1h-1zM17 555h1v1h-1zM17 561h1v1h-1zM17 563h1v1h-1zM17 564h1v1h-1zM17 583h1v1h-1zM17 589h1v1h-1zM17 593h1v1h-1zM17 598h1v1h-1zM17 599h1v1h-1zM17 600h1v1h-1zM17 619h1v1h-1zM17 622h1v1h-1zM17 629h1v1h-1zM17 643h1v1h-1zM17 669h1v1h-1zM17 672h1v1h-1zM17 674h1v1h-1zM17 704h1v1h-1zM17 717h1v1h-1zM17 727h1v1h-1zM17 749h1v1h-1zM17 773h1v1h-1zM18 376h1v1h-1zM18 383h1v1h-1zM18 385h1v1h-1zM18 393h1v1h-1zM18 421h1v1h-1zM18 445h1v1h-1zM18 451h1v1h-1zM18 492h1v1h-1zM18 493h1v1h-1zM18 502h1v1h-1zM18 534h1v1h-1zM18 543h1v1h-1zM18 549h1v1h-1zM18 555h1v1h-1zM18 579h1v1h-1zM18 583h1v1h-1zM18 594h1v1h-1zM18 625h1v1h-1zM18 626h1v1h-1zM18 628h1v1h-1zM18 666h1v1h-1zM18 667h1v1h-1zM18 668h1v1h-1zM18 679h1v1h-1zM18 681h1v1h-1zM18 703h1v1h-1zM18 710h1v1h-1zM18 726h1v1h-1zM18 751h1v1h-1zM18 752h1v1h-1zM18 760h1v1h-1zM18 765h1v1h-1zM19 376h1v1h-1zM19 393h1v1h-1zM19 396h1v1h-1zM19 399h1v1h-1zM19 416h1v1h-1zM19 447h1v1h-1zM19 459h1v1h-1zM19 461h1v1h-1zM19 495h1v1h-1zM19 504h1v1h-1zM19 507h1v1h-1zM19 528h1v1h-1zM19 533h1v1h-1zM19 542h1v1h-1zM19 559h1v1h-1zM19 581h1v1h-1zM19 583h1v1h-1zM19 587h1v1h-1zM19 589h1v1h-1zM19 627h1v1h-1zM19 646h1v1h-1zM19 669h1v1h-1zM19 671h1v1h-1zM19 673h1v1h-1zM19 683h1v1h-1zM19 723h1v1h-1zM19 743h1v1h-1zM19 751h1v1h-1zM20 378h1v1h-1zM20 388h1v1h-1zM20 395h1v1h-1zM20 396h1v1h-1zM20 397h1v1h-1zM20 398h1v1h-1zM20 400h1v1h-1zM20 421h1v1h-1zM20 445h1v1h-1zM20 451h1v1h-1zM20 455h1v1h-1zM20 484h1v1h-1zM20 491h1v1h-1zM20 501h1v1h-1zM20 529h1v1h-1zM20 534h1v1h-1zM20 582h1v1h-1zM20 585h1v1h-1zM20 586h1v1h-1zM20 592h1v1h-1zM20 596h1v1h-1zM20 597h1v1h-1zM20 670h1v1h-1zM20 677h1v1h-1zM20 684h1v1h-1zM20 706h1v1h-1zM20 718h1v1h-1zM20 742h1v1h-1zM20 748h1v1h-1zM20 753h1v1h-1zM20 754h1v1h-1zM21 380h1v1h-1zM21 381h1v1h-1zM21 384h1v1h-1zM21 392h1v1h-1zM21 394h1v1h-1zM21 396h1v1h-1zM21 397h1v1h-1zM21 424h1v1h-1zM21 451h1v1h-1zM21 456h1v1h-1zM21 464h1v1h-1zM21 467h1v1h-1zM21 485h1v1h-1zM21 486h1v1h-1zM21 493h1v1h-1zM21 494h1v1h-1zM21 496h1v1h-1zM21 503h1v1h-1zM21 543h1v1h-1zM21 555h1v1h-1zM21 603h1v1h-1zM21 626h1v1h-1zM21 672h1v1h-1zM21 674h1v1h-1zM21 687h1v1h-1zM21 713h1v1h-1zM21 724h1v1h-1zM21 749h1v1h-1zM21 764h1v1h-1zM21 765h1v1h-1zM22 382h1v1h-1zM22 392h1v1h-1zM22 401h1v1h-1zM22 444h1v1h-1zM22 447h1v1h-1zM22 450h1v1h-1zM22 463h1v1h-1zM22 465h1v1h-1zM22 466h1v1h-1zM22 495h1v1h-1zM22 508h1v1h-1zM22 542h1v1h-1zM22 550h1v1h-1zM22 555h1v1h-1zM22 558h1v1h-1zM22 581h1v1h-1zM22 585h1v1h-1zM22 597h1v1h-1zM22 600h1v1h-1zM22 602h1v1h-1zM22 606h1v1h-1zM22 622h1v1h-1zM22 640h1v1h-1zM22 679h1v1h-1zM22 706h1v1h-1zM22 713h1v1h-1zM22 750h1v1h-1zM22 761h1v1h-1zM22 763h1v1h-1zM22 768h1v1h-1zM23 379h1v1h-1zM23 381h1v1h-1zM23 382h1v1h-1zM23 388h1v1h-1zM23 395h1v1h-1zM23 421h1v1h-1zM23 443h1v1h-1zM23 490h1v1h-1zM23 491h1v1h-1zM23 503h1v1h-1zM23 505h1v1h-1zM23 527h1v1h-1zM23 533h1v1h-1zM23 535h1v1h-1zM23 544h1v1h-1zM23 561h1v1h-1zM23 562h1v1h-1zM23 622h1v1h-1zM23 624h1v1h-1zM23 636h1v1h-1zM23 637h1v1h-1zM23 640h1v1h-1zM23 679h1v1h-1zM23 684h1v1h-1zM23 709h1v1h-1zM23 725h1v1h-1zM23 752h1v1h-1zM23 761h1v1h-1zM23 766h1v1h-1zM24 384h1v1h-1zM24 393h1v1h-1zM24 394h1v1h-1zM24 395h1v1h-1zM24 397h1v1h-1zM24 447h1v1h-1zM24 457h1v1h-1zM24 459h1v1h-1zM24 485h1v1h-1zM24 486h1v1h-1zM24 500h1v1h-1zM24 501h1v1h-1zM24 547h1v1h-1zM24 585h1v1h-1zM24 590h1v1h-1zM24 598h1v1h-1zM24 622h1v1h-1zM24 625h1v1h-1zM24 629h1v1h-1zM24 639h1v1h-1zM24 645h1v1h-1zM24 665h1v1h-1zM24 669h1v1h-1zM24 713h1v1h-1zM24 721h1v1h-1zM24 722h1v1h-1zM24 723h1v1h-1zM24 724h1v1h-1zM24 750h1v1h-1zM25 382h1v1h-1zM25 392h1v1h-1zM25 400h1v1h-1zM25 452h1v1h-1zM25 489h1v1h-1zM25 505h1v1h-1zM25 535h1v1h-1zM25 547h1v1h-1zM25 549h1v1h-1zM25 565h1v1h-1zM25 588h1v1h-1zM25 599h1v1h-1zM25 600h1v1h-1zM25 601h1v1h-1zM25 606h1v1h-1zM25 630h1v1h-1zM25 683h1v1h-1zM25 720h1v1h-1zM25 721h1v1h-1zM25 726h1v1h-1zM25 727h1v1h-1zM25 765h1v1h-1zM26 384h1v1h-1zM26 393h1v1h-1zM26 423h1v1h-1zM26 458h1v1h-1zM26 488h1v1h-1zM26 492h1v1h-1zM26 533h1v1h-1zM26 543h1v1h-1zM26 558h1v1h-1zM26 588h1v1h-1zM26 602h1v1h-1zM26 628h1v1h-1zM26 640h1v1h-1zM26 665h1v1h-1zM26 678h1v1h-1zM26 681h1v1h-1zM26 689h1v1h-1zM26 723h1v1h-1zM26 749h1v1h-1zM26 751h1v1h-1zM26 755h1v1h-1zM26 762h1v1h-1zM26 764h1v1h-1zM26 766h1v1h-1zM27 389h1v1h-1zM27 420h1v1h-1zM27 421h1v1h-1zM27 425h1v1h-1zM27 440h1v1h-1zM27 445h1v1h-1zM27 504h1v1h-1zM27 528h1v1h-1zM27 535h1v1h-1zM27 547h1v1h-1zM27 549h1v1h-1zM27 560h1v1h-1zM27 604h1v1h-1zM27 626h1v1h-1zM27 630h1v1h-1zM27 639h1v1h-1zM27 641h1v1h-1zM27 643h1v1h-1zM27 663h1v1h-1zM27 684h1v1h-1zM27 685h1v1h-1zM27 716h1v1h-1zM27 726h1v1h-1zM27 750h1v1h-1zM27 762h1v1h-1zM28 381h1v1h-1zM28 392h1v1h-1zM28 393h1v1h-1zM28 400h1v1h-1zM28 423h1v1h-1zM28 447h1v1h-1zM28 450h1v1h-1zM28 465h1v1h-1zM28 488h1v1h-1zM28 492h1v1h-1zM28 535h1v1h-1zM28 541h1v1h-1zM28 542h1v1h-1zM28 557h1v1h-1zM28 560h1v1h-1zM28 600h1v1h-1zM28 627h1v1h-1zM28 638h1v1h-1zM28 639h1v1h-1zM28 664h1v1h-1zM28 666h1v1h-1zM28 667h1v1h-1zM28 672h1v1h-1zM28 679h1v1h-1zM28 681h1v1h-1zM28 689h1v1h-1zM28 727h1v1h-1zM28 750h1v1h-1zM29 377h1v1h-1zM29 381h1v1h-1zM29 392h1v1h-1zM29 397h1v1h-1zM29 399h1v1h-1zM29 447h1v1h-1zM29 465h1v1h-1zM29 487h1v1h-1zM29 499h1v1h-1zM29 502h1v1h-1zM29 546h1v1h-1zM29 548h1v1h-1zM29 585h1v1h-1zM29 600h1v1h-1zM29 625h1v1h-1zM29 631h1v1h-1zM29 643h1v1h-1zM29 667h1v1h-1zM29 672h1v1h-1zM29 680h1v1h-1zM29 684h1v1h-1zM29 706h1v1h-1zM29 708h1v1h-1zM29 709h1v1h-1zM29 751h1v1h-1zM29 753h1v1h-1zM29 757h1v1h-1zM29 766h1v1h-1zM29 768h1v1h-1zM30 377h1v1h-1zM30 389h1v1h-1zM30 420h1v1h-1zM30 421h1v1h-1zM30 425h1v1h-1zM30 450h1v1h-1zM30 451h1v1h-1zM30 452h1v1h-1zM30 453h1v1h-1zM30 458h1v1h-1zM30 463h1v1h-1zM30 464h1v1h-1zM30 506h1v1h-1zM30 531h1v1h-1zM30 534h1v1h-1zM30 536h1v1h-1zM30 557h1v1h-1zM30 561h1v1h-1zM30 563h1v1h-1zM30 587h1v1h-1zM30 625h1v1h-1zM30 626h1v1h-1zM30 632h1v1h-1zM30 638h1v1h-1zM30 641h1v1h-1zM30 643h1v1h-1zM30 667h1v1h-1zM30 678h1v1h-1zM30 680h1v1h-1zM30 686h1v1h-1zM30 687h1v1h-1zM30 719h1v1h-1zM30 720h1v1h-1zM30 748h1v1h-1zM30 749h1v1h-1zM30 753h1v1h-1zM30 765h1v1h-1zM31 377h1v1h-1zM31 381h1v1h-1zM31 384h1v1h-1zM31 388h1v1h-1zM31 399h1v1h-1zM31 424h1v1h-1zM31 428h1v1h-1zM31 491h1v1h-1zM31 492h1v1h-1zM31 502h1v1h-1zM31 534h1v1h-1zM31 542h1v1h-1zM31 546h1v1h-1zM31 549h1v1h-1zM31 559h1v1h-1zM31 560h1v1h-1zM31 588h1v1h-1zM31 590h1v1h-1zM31 641h1v1h-1zM31 666h1v1h-1zM31 672h1v1h-1zM31 683h1v1h-1zM31 686h1v1h-1zM31 707h1v1h-1zM31 712h1v1h-1zM31 720h1v1h-1zM31 721h1v1h-1zM31 748h1v1h-1zM31 755h1v1h-1zM31 765h1v1h-1zM31 767h1v1h-1zM32 388h1v1h-1zM32 394h1v1h-1zM32 445h1v1h-1zM32 447h1v1h-1zM32 451h1v1h-1zM32 452h1v1h-1zM32 463h1v1h-1zM32 490h1v1h-1zM32 505h1v1h-1zM32 506h1v1h-1zM32 510h1v1h-1zM32 539h1v1h-1zM32 543h1v1h-1zM32 544h1v1h-1zM32 546h1v1h-1zM32 559h1v1h-1zM32 563h1v1h-1zM32 585h1v1h-1zM32 597h1v1h-1zM32 601h1v1h-1zM32 632h1v1h-1zM32 644h1v1h-1zM32 672h1v1h-1zM32 673h1v1h-1zM32 678h1v1h-1zM32 708h1v1h-1zM32 719h1v1h-1zM32 724h1v1h-1zM32 747h1v1h-1zM32 760h1v1h-1zM33 374h1v1h-1zM33 382h1v1h-1zM33 388h1v1h-1zM33 397h1v1h-1zM33 420h1v1h-1zM33 422h1v1h-1zM33 458h1v1h-1zM33 463h1v1h-1zM33 487h1v1h-1zM33 493h1v1h-1zM33 499h1v1h-1zM33 502h1v1h-1zM33 504h1v1h-1zM33 527h1v1h-1zM33 537h1v1h-1zM33 552h1v1h-1zM33 555h1v1h-1zM33 558h1v1h-1zM33 589h1v1h-1zM33 626h1v1h-1zM33 627h1v1h-1zM33 637h1v1h-1zM33 640h1v1h-1zM33 662h1v1h-1zM33 665h1v1h-1zM33 671h1v1h-1zM33 683h1v1h-1zM33 687h1v1h-1zM33 713h1v1h-1zM33 720h1v1h-1zM33 726h1v1h-1zM33 753h1v1h-1zM34 395h1v1h-1zM34 396h1v1h-1zM34 449h1v1h-1zM34 451h1v1h-1zM34 452h1v1h-1zM34 458h1v1h-1zM34 460h1v1h-1zM34 466h1v1h-1zM34 491h1v1h-1zM34 494h1v1h-1zM34 504h1v1h-1zM34 535h1v1h-1zM34 549h1v1h-1zM34 553h1v1h-1zM34 555h1v1h-1zM34 558h1v1h-1zM34 559h1v1h-1zM34 561h1v1h-1zM34 598h1v1h-1zM34 632h1v1h-1zM34 638h1v1h-1zM34 640h1v1h-1zM34 642h1v1h-1zM34 663h1v1h-1zM34 671h1v1h-1zM34 674h1v1h-1zM34 688h1v1h-1zM34 714h1v1h-1zM34 716h1v1h-1zM34 721h1v1h-1zM34 722h1v1h-1zM34 748h1v1h-1zM34 749h1v1h-1zM35 384h1v1h-1zM35 401h1v1h-1zM35 403h1v1h-1zM35 422h1v1h-1zM35 423h1v1h-1zM35 447h1v1h-1zM35 467h1v1h-1zM35 487h1v1h-1zM35 505h1v1h-1zM35 507h1v1h-1zM35 535h1v1h-1zM35 545h1v1h-1zM35 548h1v1h-1zM35 585h1v1h-1zM35 586h1v1h-1zM35 599h1v1h-1zM35 603h1v1h-1zM35 630h1v1h-1zM35 642h1v1h-1zM35 672h1v1h-1zM35 687h1v1h-1zM35 710h1v1h-1zM35 713h1v1h-1zM35 721h1v1h-1zM35 754h1v1h-1zM35 757h1v1h-1zM35 764h1v1h-1zM36 379h1v1h-1zM36 396h1v1h-1zM36 398h1v1h-1zM36 460h1v1h-1zM36 461h1v1h-1zM36 465h1v1h-1zM36 466h1v1h-1zM36 489h1v1h-1zM36 493h1v1h-1zM36 501h1v1h-1zM36 531h1v1h-1zM36 533h1v1h-1zM36 535h1v1h-1zM36 588h1v1h-1zM36 590h1v1h-1zM36 597h1v1h-1zM36 603h1v1h-1zM36 629h1v1h-1zM36 639h1v1h-1zM36 643h1v1h-1zM36 679h1v1h-1zM36 681h1v1h-1zM36 685h1v1h-1zM36 708h1v1h-1zM36 710h1v1h-1zM36 716h1v1h-1zM36 751h1v1h-1zM36 758h1v1h-1zM36 760h1v1h-1zM36 763h1v1h-1zM36 767h1v1h-1zM37 379h1v1h-1zM37 380h1v1h-1zM37 383h1v1h-1zM37 386h1v1h-1zM37 398h1v1h-1zM37 421h1v1h-1zM37 422h1v1h-1zM37 424h1v1h-1zM37 446h1v1h-1zM37 447h1v1h-1zM37 462h1v1h-1zM37 466h1v1h-1zM37 487h1v1h-1zM37 491h1v1h-1zM37 500h1v1h-1zM37 531h1v1h-1zM37 546h1v1h-1zM37 551h1v1h-1zM37 589h1v1h-1zM37 626h1v1h-1zM37 632h1v1h-1zM37 641h1v1h-1zM37 667h1v1h-1zM37 680h1v1h-1zM37 719h1v1h-1zM37 750h1v1h-1zM37 753h1v1h-1zM37 763h1v1h-1zM37 764h1v1h-1zM38 379h1v1h-1zM38 383h1v1h-1zM38 393h1v1h-1zM38 424h1v1h-1zM38 448h1v1h-1zM38 452h1v1h-1zM38 460h1v1h-1zM38 505h1v1h-1zM38 531h1v1h-1zM38 543h1v1h-1zM38 551h1v1h-1zM38 558h1v1h-1zM38 559h1v1h-1zM38 563h1v1h-1zM38 591h1v1h-1zM38 600h1v1h-1zM38 638h1v1h-1zM38 643h1v1h-1zM38 679h1v1h-1zM38 726h1v1h-1zM38 751h1v1h-1zM38 753h1v1h-1zM38 757h1v1h-1zM39 385h1v1h-1zM39 397h1v1h-1zM39 398h1v1h-1zM39 422h1v1h-1zM39 426h1v1h-1zM39 450h1v1h-1zM39 457h1v1h-1zM39 461h1v1h-1zM39 468h1v1h-1zM39 490h1v1h-1zM39 491h1v1h-1zM39 503h1v1h-1zM39 533h1v1h-1zM39 534h1v1h-1zM39 535h1v1h-1zM39 585h1v1h-1zM39 587h1v1h-1zM39 588h1v1h-1zM39 598h1v1h-1zM39 599h1v1h-1zM39 602h1v1h-1zM39 603h1v1h-1zM39 666h1v1h-1zM39 670h1v1h-1zM39 672h1v1h-1zM39 679h1v1h-1zM39 684h1v1h-1zM39 710h1v1h-1zM39 712h1v1h-1zM39 715h1v1h-1zM39 724h1v1h-1zM39 725h1v1h-1zM39 726h1v1h-1zM39 750h1v1h-1zM39 751h1v1h-1zM39 761h1v1h-1zM40 381h1v1h-1zM40 384h1v1h-1zM40 392h1v1h-1zM40 417h1v1h-1zM40 422h1v1h-1zM40 492h1v1h-1zM40 495h1v1h-1zM40 502h1v1h-1zM40 585h1v1h-1zM40 587h1v1h-1zM40 598h1v1h-1zM40 600h1v1h-1zM40 637h1v1h-1zM40 642h1v1h-1zM40 672h1v1h-1zM40 708h1v1h-1zM40 709h1v1h-1zM40 716h1v1h-1zM40 753h1v1h-1zM40 754h1v1h-1zM40 764h1v1h-1zM41 374h1v1h-1zM41 378h1v1h-1zM41 390h1v1h-1zM41 392h1v1h-1zM41 399h1v1h-1zM41 421h1v1h-1zM41 457h1v1h-1zM41 466h1v1h-1zM41 489h1v1h-1zM41 506h1v1h-1zM41 548h1v1h-1zM41 551h1v1h-1zM41 559h1v1h-1zM41 563h1v1h-1zM41 583h1v1h-1zM41 584h1v1h-1zM41 587h1v1h-1zM41 603h1v1h-1zM41 604h1v1h-1zM41 625h1v1h-1zM41 634h1v1h-1zM41 637h1v1h-1zM41 691h1v1h-1zM41 705h1v1h-1zM41 708h1v1h-1zM41 748h1v1h-1zM41 753h1v1h-1zM41 755h1v1h-1zM42 373h1v1h-1zM42 378h1v1h-1zM42 380h1v1h-1zM42 392h1v1h-1zM42 393h1v1h-1zM42 395h1v1h-1zM42 505h1v1h-1zM42 506h1v1h-1zM42 556h1v1h-1zM42 582h1v1h-1zM42 590h1v1h-1zM42 677h1v1h-1zM42 680h1v1h-1zM42 684h1v1h-1zM42 702h1v1h-1zM42 708h1v1h-1zM42 710h1v1h-1zM42 722h1v1h-1zM42 723h1v1h-1zM42 724h1v1h-1zM42 753h1v1h-1zM42 757h1v1h-1zM43 372h1v1h-1zM43 391h1v1h-1zM43 424h1v1h-1zM43 465h1v1h-1zM43 549h1v1h-1zM43 559h1v1h-1zM43 562h1v1h-1zM43 629h1v1h-1zM43 677h1v1h-1zM43 703h1v1h-1zM43 704h1v1h-1zM43 720h1v1h-1zM43 721h1v1h-1zM43 725h1v1h-1zM43 750h1v1h-1zM43 752h1v1h-1zM43 753h1v1h-1zM44 377h1v1h-1zM44 390h1v1h-1zM44 394h1v1h-1zM44 421h1v1h-1zM44 427h1v1h-1zM44 462h1v1h-1zM44 503h1v1h-1zM44 507h1v1h-1zM44 536h1v1h-1zM44 543h1v1h-1zM44 556h1v1h-1zM44 562h1v1h-1zM44 599h1v1h-1zM44 603h1v1h-1zM44 674h1v1h-1zM44 675h1v1h-1zM44 720h1v1h-1zM44 725h1v1h-1zM44 752h1v1h-1zM44 753h1v1h-1zM44 756h1v1h-1zM44 760h1v1h-1zM44 763h1v1h-1zM44 765h1v1h-1zM45 391h1v1h-1zM45 394h1v1h-1zM45 421h1v1h-1zM45 423h1v1h-1zM45 424h1v1h-1zM45 453h1v1h-1zM45 456h1v1h-1zM45 459h1v1h-1zM45 504h1v1h-1zM45 562h1v1h-1zM45 585h1v1h-1zM45 587h1v1h-1zM45 588h1v1h-1zM45 600h1v1h-1zM45 624h1v1h-1zM45 627h1v1h-1zM45 682h1v1h-1zM45 685h1v1h-1zM45 705h1v1h-1zM45 706h1v1h-1zM45 707h1v1h-1zM45 710h1v1h-1zM45 724h1v1h-1zM45 748h1v1h-1zM45 753h1v1h-1zM45 756h1v1h-1zM46 390h1v1h-1zM46 394h1v1h-1zM46 397h1v1h-1zM46 425h1v1h-1zM46 428h1v1h-1zM46 455h1v1h-1zM46 458h1v1h-1zM46 599h1v1h-1zM46 600h1v1h-1zM46 602h1v1h-1zM46 624h1v1h-1zM46 631h1v1h-1zM46 682h1v1h-1zM46 683h1v1h-1zM46 716h1v1h-1zM46 723h1v1h-1zM46 750h1v1h-1zM46 753h1v1h-1zM46 757h1v1h-1zM47 395h1v1h-1zM47 397h1v1h-1zM47 398h1v1h-1zM47 460h1v1h-1zM47 545h1v1h-1zM47 556h1v1h-1zM47 561h1v1h-1zM47 598h1v1h-1zM47 601h1v1h-1zM47 626h1v1h-1zM47 628h1v1h-1zM47 635h1v1h-1zM47 686h1v1h-1zM47 748h1v1h-1zM47 749h1v1h-1zM47 751h1v1h-1zM47 767h1v1h-1zM48 423h1v1h-1zM48 425h1v1h-1zM48 426h1v1h-1zM48 461h1v1h-1zM48 497h1v1h-1zM48 500h1v1h-1zM48 507h1v1h-1zM48 544h1v1h-1zM48 550h1v1h-1zM48 556h1v1h-1zM48 558h1v1h-1zM48 597h1v1h-1zM48 603h1v1h-1zM48 626h1v1h-1zM48 633h1v1h-1zM48 674h1v1h-1zM48 679h1v1h-1zM48 681h1v1h-1zM48 684h1v1h-1zM48 751h1v1h-1zM48 763h1v1h-1zM48 766h1v1h-1zM49 398h1v1h-1zM49 421h1v1h-1zM49 424h1v1h-1zM49 458h1v1h-1zM49 461h1v1h-1zM49 499h1v1h-1zM49 544h1v1h-1zM49 545h1v1h-1zM49 551h1v1h-1zM49 556h1v1h-1zM49 598h1v1h-1zM49 626h1v1h-1zM49 629h1v1h-1zM49 673h1v1h-1zM49 686h1v1h-1zM50 402h1v1h-1zM50 425h1v1h-1zM50 460h1v1h-1zM50 463h1v1h-1zM50 504h1v1h-1zM50 505h1v1h-1zM50 545h1v1h-1zM50 559h1v1h-1zM50 595h1v1h-1zM50 596h1v1h-1zM50 599h1v1h-1zM50 603h1v1h-1zM50 627h1v1h-1zM50 629h1v1h-1zM50 631h1v1h-1zM50 633h1v1h-1zM50 676h1v1h-1zM50 678h1v1h-1zM50 680h1v1h-1zM50 721h1v1h-1zM50 722h1v1h-1zM50 723h1v1h-1zM50 760h1v1h-1zM51 419h1v1h-1zM51 460h1v1h-1zM51 497h1v1h-1zM51 504h1v1h-1zM51 545h1v1h-1zM51 549h1v1h-1zM51 550h1v1h-1zM51 557h1v1h-1zM51 601h1v1h-1zM51 605h1v1h-1zM51 728h1v1h-1zM51 747h1v1h-1zM52 391h1v1h-1zM52 395h1v1h-1zM52 400h1v1h-1zM52 421h1v1h-1zM52 498h1v1h-1zM52 502h1v1h-1zM52 602h1v1h-1zM52 629h1v1h-1zM52 632h1v1h-1zM52 676h1v1h-1zM52 679h1v1h-1zM52 682h1v1h-1zM52 721h1v1h-1zM52 722h1v1h-1zM52 755h1v1h-1zM52 760h1v1h-1zM53 466h1v1h-1zM53 508h1v1h-1zM53 544h1v1h-1zM53 597h1v1h-1zM53 625h1v1h-1zM53 629h1v1h-1zM53 679h1v1h-1zM53 680h1v1h-1zM53 687h1v1h-1zM53 724h1v1h-1zM53 764h1v1h-1zM54 400h1v1h-1zM54 423h1v1h-1zM54 545h1v1h-1zM54 549h1v1h-1zM54 624h1v1h-1zM54 681h1v1h-1zM54 723h1v1h-1zM54 727h1v1h-1zM54 754h1v1h-1zM54 758h1v1h-1zM54 760h1v1h-1zM54 768h1v1h-1zM55 395h1v1h-1zM55 470h1v1h-1zM55 544h1v1h-1zM55 620h1v1h-1zM55 625h1v1h-1zM55 680h1v1h-1zM55 683h1v1h-1zM55 725h1v1h-1zM55 752h1v1h-1zM55 760h1v1h-1zM55 762h1v1h-1zM55 763h1v1h-1zM56 416h1v1h-1zM56 419h1v1h-1zM56 420h1v1h-1zM56 427h1v1h-1zM56 625h1v1h-1zM56 627h1v1h-1zM56 631h1v1h-1zM56 679h1v1h-1zM56 685h1v1h-1zM56 691h1v1h-1zM57 389h1v1h-1zM57 391h1v1h-1zM57 419h1v1h-1zM57 422h1v1h-1zM57 599h1v1h-1zM57 632h1v1h-1zM57 681h1v1h-1zM57 684h1v1h-1zM57 721h1v1h-1zM57 724h1v1h-1zM57 727h1v1h-1zM57 772h1v1h-1zM58 385h1v1h-1zM58 390h1v1h-1zM58 394h1v1h-1zM58 541h1v1h-1zM58 673h1v1h-1zM58 721h1v1h-1zM58 759h1v1h-1zM58 762h1v1h-1zM58 764h1v1h-1zM58 768h1v1h-1zM59 395h1v1h-1zM59 415h1v1h-1zM59 423h1v1h-1zM59 427h1v1h-1zM59 549h1v1h-1zM59 681h1v1h-1zM59 722h1v1h-1zM59 768h1v1h-1zM59 769h1v1h-1zM60 399h1v1h-1zM60 419h1v1h-1zM60 422h1v1h-1zM60 424h1v1h-1zM60 540h1v1h-1zM60 545h1v1h-1zM60 682h1v1h-1zM60 759h1v1h-1zM60 767h1v1h-1zM60 768h1v1h-1zM61 624h1v1h-1zM61 628h1v1h-1zM61 679h1v1h-1zM61 681h1v1h-1zM61 757h1v1h-1zM62 393h1v1h-1zM62 396h1v1h-1zM62 418h1v1h-1zM62 421h1v1h-1zM62 549h1v1h-1zM62 632h1v1h-1zM62 676h1v1h-1zM62 687h1v1h-1zM62 769h1v1h-1zM63 390h1v1h-1zM63 392h1v1h-1zM63 394h1v1h-1zM63 423h1v1h-1zM63 542h1v1h-1zM63 544h1v1h-1zM63 624h1v1h-1zM63 626h1v1h-1zM63 631h1v1h-1zM63 676h1v1h-1zM63 678h1v1h-1zM64 392h1v1h-1zM64 394h1v1h-1zM64 427h1v1h-1zM64 544h1v1h-1zM64 546h1v1h-1zM64 548h1v1h-1zM64 549h1v1h-1zM64 624h1v1h-1zM64 626h1v1h-1zM64 630h1v1h-1zM64 674h1v1h-1zM64 681h1v1h-1zM64 761h1v1h-1zM65 392h1v1h-1zM65 397h1v1h-1zM65 427h1v1h-1zM65 543h1v1h-1zM65 548h1v1h-1zM65 621h1v1h-1zM65 625h1v1h-1zM65 628h1v1h-1zM65 631h1v1h-1zM65 681h1v1h-1zM65 683h1v1h-1zM66 393h1v1h-1zM66 399h1v1h-1zM66 422h1v1h-1zM66 425h1v1h-1zM66 622h1v1h-1zM66 679h1v1h-1zM66 680h1v1h-1zM66 682h1v1h-1zM67 418h1v1h-1zM67 425h1v1h-1zM67 544h1v1h-1zM67 552h1v1h-1zM68 416h1v1h-1zM68 425h1v1h-1zM68 623h1v1h-1zM68 684h1v1h-1zM69 397h1v1h-1zM69 418h1v1h-1zM69 425h1v1h-1zM69 541h1v1h-1zM69 680h1v1h-1zM70 396h1v1h-1zM70 417h1v1h-1zM70 548h1v1h-1zM70 555h1v1h-1zM71 417h1v1h-1zM71 420h1v1h-1zM71 421h1v1h-1zM71 539h1v1h-1zM71 546h1v1h-1zM71 548h1v1h-1zM72 418h1v1h-1zM72 422h1v1h-1zM72 423h1v1h-1zM72 540h1v1h-1zM72 542h1v1h-1zM72 544h1v1h-1zM72 546h1v1h-1zM72 624h1v1h-1zM72 632h1v1h-1zM73 390h1v1h-1zM73 420h1v1h-1zM73 426h1v1h-1zM73 541h1v1h-1zM74 421h1v1h-1zM74 426h1v1h-1zM74 428h1v1h-1zM75 427h1v1h-1zM75 543h1v1h-1zM76 416h1v1h-1zM76 423h1v1h-1zM77 417h1v1h-1zM77 420h1v1h-1zM77 426h1v1h-1zM77 551h1v1h-1zM78 416h1v1h-1zM78 548h1v1h-1zM79 425h1v1h-1zM81 420h1v1h-1zM81 424h1v1h-1zM81 426h1v1h-1zM82 422h1v1h-1zM82 425h1v1h-1zM82 426h1v1h-1zM82 427h1v1h-1zM83 415h1v1h-1zM83 421h1v1h-1z"/><path fill="#e0781c" d="M6 581h1v1h-1zM6 672h1v1h-1zM6 753h1v1h-1zM7 377h1v1h-1zM7 420h1v1h-1zM7 422h1v1h-1zM7 425h1v1h-1zM7 624h1v1h-1zM7 765h1v1h-1zM8 416h1v1h-1zM8 425h1v1h-1zM8 444h1v1h-1zM8 447h1v1h-1zM8 458h1v1h-1zM8 489h1v1h-1zM8 531h1v1h-1zM8 582h1v1h-1zM8 622h1v1h-1zM8 623h1v1h-1zM8 668h1v1h-1zM8 746h1v1h-1zM8 751h1v1h-1zM8 753h1v1h-1zM9 377h1v1h-1zM9 383h1v1h-1zM9 385h1v1h-1zM9 392h1v1h-1zM9 486h1v1h-1zM9 488h1v1h-1zM9 582h1v1h-1zM9 624h1v1h-1zM9 628h1v1h-1zM9 644h1v1h-1zM9 664h1v1h-1zM9 670h1v1h-1zM9 680h1v1h-1zM9 741h1v1h-1zM9 746h1v1h-1zM9 759h1v1h-1zM9 766h1v1h-1zM9 768h1v1h-1zM10 378h1v1h-1zM10 417h1v1h-1zM10 421h1v1h-1zM10 423h1v1h-1zM10 447h1v1h-1zM10 451h1v1h-1zM10 455h1v1h-1zM10 468h1v1h-1zM10 485h1v1h-1zM10 496h1v1h-1zM10 499h1v1h-1zM10 550h1v1h-1zM10 579h1v1h-1zM10 587h1v1h-1zM10 600h1v1h-1zM10 640h1v1h-1zM10 679h1v1h-1zM10 685h1v1h-1zM10 747h1v1h-1zM10 753h1v1h-1zM10 755h1v1h-1zM10 764h1v1h-1zM10 766h1v1h-1zM11 377h1v1h-1zM11 379h1v1h-1zM11 385h1v1h-1zM11 389h1v1h-1zM11 422h1v1h-1zM11 427h1v1h-1zM11 459h1v1h-1zM11 492h1v1h-1zM11 505h1v1h-1zM11 532h1v1h-1zM11 540h1v1h-1zM11 543h1v1h-1zM11 545h1v1h-1zM11 562h1v1h-1zM11 630h1v1h-1zM11 638h1v1h-1zM11 668h1v1h-1zM11 760h1v1h-1zM11 761h1v1h-1zM12 379h1v1h-1zM12 385h1v1h-1zM12 428h1v1h-1zM12 450h1v1h-1zM12 486h1v1h-1zM12 489h1v1h-1zM12 502h1v1h-1zM12 505h1v1h-1zM12 541h1v1h-1zM12 559h1v1h-1zM12 560h1v1h-1zM12 582h1v1h-1zM12 603h1v1h-1zM12 626h1v1h-1zM12 639h1v1h-1zM12 723h1v1h-1zM12 742h1v1h-1zM12 743h1v1h-1zM12 763h1v1h-1zM13 376h1v1h-1zM13 383h1v1h-1zM13 385h1v1h-1zM13 391h1v1h-1zM13 399h1v1h-1zM13 429h1v1h-1zM13 465h1v1h-1zM13 490h1v1h-1zM13 498h1v1h-1zM13 499h1v1h-1zM13 581h1v1h-1zM13 597h1v1h-1zM13 600h1v1h-1zM13 601h1v1h-1zM13 602h1v1h-1zM13 603h1v1h-1zM13 637h1v1h-1zM13 680h1v1h-1zM13 711h1v1h-1zM13 726h1v1h-1zM13 749h1v1h-1zM13 764h1v1h-1zM13 765h1v1h-1zM14 391h1v1h-1zM14 456h1v1h-1zM14 462h1v1h-1zM14 464h1v1h-1zM14 499h1v1h-1zM14 532h1v1h-1zM14 551h1v1h-1zM14 563h1v1h-1zM14 599h1v1h-1zM14 601h1v1h-1zM14 604h1v1h-1zM14 642h1v1h-1zM14 662h1v1h-1zM14 663h1v1h-1zM14 664h1v1h-1zM14 682h1v1h-1zM14 706h1v1h-1zM14 710h1v1h-1zM14 713h1v1h-1zM14 724h1v1h-1zM14 759h1v1h-1zM14 760h1v1h-1zM15 384h1v1h-1zM15 417h1v1h-1zM15 452h1v1h-1zM15 485h1v1h-1zM15 505h1v1h-1zM15 543h1v1h-1zM15 550h1v1h-1zM15 557h1v1h-1zM15 595h1v1h-1zM15 634h1v1h-1zM15 636h1v1h-1zM15 744h1v1h-1zM15 747h1v1h-1zM15 753h1v1h-1zM15 755h1v1h-1zM15 760h1v1h-1zM15 765h1v1h-1zM16 381h1v1h-1zM16 392h1v1h-1zM16 424h1v1h-1zM16 443h1v1h-1zM16 446h1v1h-1zM16 449h1v1h-1zM16 456h1v1h-1zM16 457h1v1h-1zM16 501h1v1h-1zM16 504h1v1h-1zM16 579h1v1h-1zM16 580h1v1h-1zM16 586h1v1h-1zM16 593h1v1h-1zM16 633h1v1h-1zM16 641h1v1h-1zM16 644h1v1h-1zM16 708h1v1h-1zM16 712h1v1h-1zM16 717h1v1h-1zM16 720h1v1h-1zM16 723h1v1h-1zM17 381h1v1h-1zM17 397h1v1h-1zM17 416h1v1h-1zM17 423h1v1h-1zM17 446h1v1h-1zM17 448h1v1h-1zM17 527h1v1h-1zM17 535h1v1h-1zM17 591h1v1h-1zM17 632h1v1h-1zM17 636h1v1h-1zM17 670h1v1h-1zM17 682h1v1h-1zM17 752h1v1h-1zM17 756h1v1h-1zM17 762h1v1h-1zM17 763h1v1h-1zM17 765h1v1h-1zM17 766h1v1h-1zM18 381h1v1h-1zM18 383h1v1h-1zM18 386h1v1h-1zM18 417h1v1h-1zM18 424h1v1h-1zM18 451h1v1h-1zM18 466h1v1h-1zM18 528h1v1h-1zM18 529h1v1h-1zM18 546h1v1h-1zM18 551h1v1h-1zM18 557h1v1h-1zM18 561h1v1h-1zM18 596h1v1h-1zM18 598h1v1h-1zM18 600h1v1h-1zM18 623h1v1h-1zM18 665h1v1h-1zM18 717h1v1h-1zM18 723h1v1h-1zM18 724h1v1h-1zM19 379h1v1h-1zM19 380h1v1h-1zM19 383h1v1h-1zM19 385h1v1h-1zM19 420h1v1h-1zM19 450h1v1h-1zM19 461h1v1h-1zM19 494h1v1h-1zM19 503h1v1h-1zM19 530h1v1h-1zM19 533h1v1h-1zM19 535h1v1h-1zM19 549h1v1h-1zM19 561h1v1h-1zM19 562h1v1h-1zM19 563h1v1h-1zM19 590h1v1h-1zM19 624h1v1h-1zM19 626h1v1h-1zM19 668h1v1h-1zM19 669h1v1h-1zM19 674h1v1h-1zM19 678h1v1h-1zM19 753h1v1h-1zM19 754h1v1h-1zM19 762h1v1h-1zM19 767h1v1h-1zM20 396h1v1h-1zM20 502h1v1h-1zM20 506h1v1h-1zM20 543h1v1h-1zM20 544h1v1h-1zM20 551h1v1h-1zM20 559h1v1h-1zM20 585h1v1h-1zM20 639h1v1h-1zM20 640h1v1h-1zM20 642h1v1h-1zM20 648h1v1h-1zM20 673h1v1h-1zM20 676h1v1h-1zM20 748h1v1h-1zM20 768h1v1h-1zM21 379h1v1h-1zM21 381h1v1h-1zM21 399h1v1h-1zM21 420h1v1h-1zM21 423h1v1h-1zM21 443h1v1h-1zM21 453h1v1h-1zM21 455h1v1h-1zM21 500h1v1h-1zM21 531h1v1h-1zM21 549h1v1h-1zM21 598h1v1h-1zM21 642h1v1h-1zM21 670h1v1h-1zM21 674h1v1h-1zM21 705h1v1h-1zM21 713h1v1h-1zM21 715h1v1h-1zM21 726h1v1h-1zM21 752h1v1h-1zM21 754h1v1h-1zM21 766h1v1h-1zM22 377h1v1h-1zM22 413h1v1h-1zM22 420h1v1h-1zM22 447h1v1h-1zM22 451h1v1h-1zM22 458h1v1h-1zM22 463h1v1h-1zM22 465h1v1h-1zM22 491h1v1h-1zM22 505h1v1h-1zM22 552h1v1h-1zM22 581h1v1h-1zM22 605h1v1h-1zM22 640h1v1h-1zM22 674h1v1h-1zM22 678h1v1h-1zM22 679h1v1h-1zM22 686h1v1h-1zM22 704h1v1h-1zM22 711h1v1h-1zM22 765h1v1h-1zM23 381h1v1h-1zM23 385h1v1h-1zM23 399h1v1h-1zM23 441h1v1h-1zM23 445h1v1h-1zM23 451h1v1h-1zM23 457h1v1h-1zM23 467h1v1h-1zM23 482h1v1h-1zM23 502h1v1h-1zM23 535h1v1h-1zM23 587h1v1h-1zM23 588h1v1h-1zM23 597h1v1h-1zM23 600h1v1h-1zM23 602h1v1h-1zM23 630h1v1h-1zM23 648h1v1h-1zM23 665h1v1h-1zM23 671h1v1h-1zM23 672h1v1h-1zM23 677h1v1h-1zM23 704h1v1h-1zM23 719h1v1h-1zM23 726h1v1h-1zM23 743h1v1h-1zM23 768h1v1h-1zM24 386h1v1h-1zM24 421h1v1h-1zM24 466h1v1h-1zM24 607h1v1h-1zM24 626h1v1h-1zM24 702h1v1h-1zM24 704h1v1h-1zM24 716h1v1h-1zM24 719h1v1h-1zM25 491h1v1h-1zM25 493h1v1h-1zM25 504h1v1h-1zM25 531h1v1h-1zM25 586h1v1h-1zM25 603h1v1h-1zM25 604h1v1h-1zM25 620h1v1h-1zM25 622h1v1h-1zM25 626h1v1h-1zM25 644h1v1h-1zM25 665h1v1h-1zM25 671h1v1h-1zM25 679h1v1h-1zM25 708h1v1h-1zM25 713h1v1h-1zM25 717h1v1h-1zM25 757h1v1h-1zM25 760h1v1h-1zM26 382h1v1h-1zM26 424h1v1h-1zM26 449h1v1h-1zM26 466h1v1h-1zM26 467h1v1h-1zM26 507h1v1h-1zM26 542h1v1h-1zM26 550h1v1h-1zM26 551h1v1h-1zM26 566h1v1h-1zM26 584h1v1h-1zM26 585h1v1h-1zM26 586h1v1h-1zM26 595h1v1h-1zM26 598h1v1h-1zM26 626h1v1h-1zM26 634h1v1h-1zM26 638h1v1h-1zM26 640h1v1h-1zM26 666h1v1h-1zM26 668h1v1h-1zM26 682h1v1h-1zM26 684h1v1h-1zM26 687h1v1h-1zM26 714h1v1h-1zM26 719h1v1h-1zM26 754h1v1h-1zM27 380h1v1h-1zM27 384h1v1h-1zM27 421h1v1h-1zM27 426h1v1h-1zM27 453h1v1h-1zM27 454h1v1h-1zM27 466h1v1h-1zM27 489h1v1h-1zM27 492h1v1h-1zM27 503h1v1h-1zM27 507h1v1h-1zM27 533h1v1h-1zM27 535h1v1h-1zM27 536h1v1h-1zM27 558h1v1h-1zM27 561h1v1h-1zM27 590h1v1h-1zM27 632h1v1h-1zM27 642h1v1h-1zM27 666h1v1h-1zM27 679h1v1h-1zM27 680h1v1h-1zM27 681h1v1h-1zM27 709h1v1h-1zM28 379h1v1h-1zM28 383h1v1h-1zM28 388h1v1h-1zM28 395h1v1h-1zM28 397h1v1h-1zM28 427h1v1h-1zM28 449h1v1h-1zM28 451h1v1h-1zM28 454h1v1h-1zM28 466h1v1h-1zM28 503h1v1h-1zM28 531h1v1h-1zM28 542h1v1h-1zM28 547h1v1h-1zM28 560h1v1h-1zM28 584h1v1h-1zM28 590h1v1h-1zM28 627h1v1h-1zM28 642h1v1h-1zM28 662h1v1h-1zM28 667h1v1h-1zM28 681h1v1h-1zM28 710h1v1h-1zM28 712h1v1h-1zM28 753h1v1h-1zM29 384h1v1h-1zM29 387h1v1h-1zM29 423h1v1h-1zM29 452h1v1h-1zM29 464h1v1h-1zM29 504h1v1h-1zM29 533h1v1h-1zM29 536h1v1h-1zM29 545h1v1h-1zM29 547h1v1h-1zM29 557h1v1h-1zM29 561h1v1h-1zM29 584h1v1h-1zM29 586h1v1h-1zM29 601h1v1h-1zM29 640h1v1h-1zM29 663h1v1h-1zM29 671h1v1h-1zM29 672h1v1h-1zM29 683h1v1h-1zM29 749h1v1h-1zM29 762h1v1h-1zM30 382h1v1h-1zM30 425h1v1h-1zM30 494h1v1h-1zM30 495h1v1h-1zM30 497h1v1h-1zM30 548h1v1h-1zM30 550h1v1h-1zM30 585h1v1h-1zM30 587h1v1h-1zM30 588h1v1h-1zM30 600h1v1h-1zM30 603h1v1h-1zM30 629h1v1h-1zM30 667h1v1h-1zM30 672h1v1h-1zM30 679h1v1h-1zM30 709h1v1h-1zM30 723h1v1h-1zM30 751h1v1h-1zM30 753h1v1h-1zM30 754h1v1h-1zM30 755h1v1h-1zM30 763h1v1h-1zM31 389h1v1h-1zM31 393h1v1h-1zM31 423h1v1h-1zM31 426h1v1h-1zM31 451h1v1h-1zM31 453h1v1h-1zM31 492h1v1h-1zM31 495h1v1h-1zM31 502h1v1h-1zM31 531h1v1h-1zM31 536h1v1h-1zM31 541h1v1h-1zM31 585h1v1h-1zM31 590h1v1h-1zM31 597h1v1h-1zM31 600h1v1h-1zM31 667h1v1h-1zM31 668h1v1h-1zM31 682h1v1h-1zM31 686h1v1h-1zM31 709h1v1h-1zM31 715h1v1h-1zM31 722h1v1h-1zM31 763h1v1h-1zM32 392h1v1h-1zM32 393h1v1h-1zM32 402h1v1h-1zM32 420h1v1h-1zM32 423h1v1h-1zM32 425h1v1h-1zM32 459h1v1h-1zM32 460h1v1h-1zM32 466h1v1h-1zM32 489h1v1h-1zM32 501h1v1h-1zM32 509h1v1h-1zM32 552h1v1h-1zM32 561h1v1h-1zM32 597h1v1h-1zM32 601h1v1h-1zM32 631h1v1h-1zM32 669h1v1h-1zM32 672h1v1h-1zM32 713h1v1h-1zM32 721h1v1h-1zM32 762h1v1h-1zM32 763h1v1h-1zM33 379h1v1h-1zM33 388h1v1h-1zM33 393h1v1h-1zM33 425h1v1h-1zM33 426h1v1h-1zM33 461h1v1h-1zM33 491h1v1h-1zM33 504h1v1h-1zM33 510h1v1h-1zM33 531h1v1h-1zM33 550h1v1h-1zM33 562h1v1h-1zM33 629h1v1h-1zM33 632h1v1h-1zM33 663h1v1h-1zM33 678h1v1h-1zM33 680h1v1h-1zM33 706h1v1h-1zM33 715h1v1h-1zM33 727h1v1h-1zM33 758h1v1h-1zM33 766h1v1h-1zM34 379h1v1h-1zM34 455h1v1h-1zM34 467h1v1h-1zM34 493h1v1h-1zM34 501h1v1h-1zM34 502h1v1h-1zM34 528h1v1h-1zM34 529h1v1h-1zM34 530h1v1h-1zM34 585h1v1h-1zM34 599h1v1h-1zM34 630h1v1h-1zM34 639h1v1h-1zM34 662h1v1h-1zM34 668h1v1h-1zM34 679h1v1h-1zM34 681h1v1h-1zM34 705h1v1h-1zM34 712h1v1h-1zM34 725h1v1h-1zM35 375h1v1h-1zM35 376h1v1h-1zM35 391h1v1h-1zM35 396h1v1h-1zM35 448h1v1h-1zM35 529h1v1h-1zM35 556h1v1h-1zM35 557h1v1h-1zM35 583h1v1h-1zM35 588h1v1h-1zM35 602h1v1h-1zM35 637h1v1h-1zM35 642h1v1h-1zM35 671h1v1h-1zM35 679h1v1h-1zM35 680h1v1h-1zM35 683h1v1h-1zM35 709h1v1h-1zM35 758h1v1h-1zM35 769h1v1h-1zM36 383h1v1h-1zM36 399h1v1h-1zM36 425h1v1h-1zM36 460h1v1h-1zM36 483h1v1h-1zM36 492h1v1h-1zM36 532h1v1h-1zM36 556h1v1h-1zM36 558h1v1h-1zM36 583h1v1h-1zM36 585h1v1h-1zM36 598h1v1h-1zM36 602h1v1h-1zM36 603h1v1h-1zM36 633h1v1h-1zM36 641h1v1h-1zM36 673h1v1h-1zM36 709h1v1h-1zM36 714h1v1h-1zM36 724h1v1h-1zM36 753h1v1h-1zM36 767h1v1h-1zM37 381h1v1h-1zM37 383h1v1h-1zM37 394h1v1h-1zM37 418h1v1h-1zM37 427h1v1h-1zM37 452h1v1h-1zM37 461h1v1h-1zM37 487h1v1h-1zM37 495h1v1h-1zM37 503h1v1h-1zM37 538h1v1h-1zM37 546h1v1h-1zM37 549h1v1h-1zM37 555h1v1h-1zM37 584h1v1h-1zM37 592h1v1h-1zM37 596h1v1h-1zM37 627h1v1h-1zM37 644h1v1h-1zM37 714h1v1h-1zM37 718h1v1h-1zM37 720h1v1h-1zM37 723h1v1h-1zM37 748h1v1h-1zM37 752h1v1h-1zM37 754h1v1h-1zM37 755h1v1h-1zM37 757h1v1h-1zM37 768h1v1h-1zM38 387h1v1h-1zM38 490h1v1h-1zM38 496h1v1h-1zM38 501h1v1h-1zM38 502h1v1h-1zM38 537h1v1h-1zM38 540h1v1h-1zM38 585h1v1h-1zM38 591h1v1h-1zM38 629h1v1h-1zM38 710h1v1h-1zM38 711h1v1h-1zM38 713h1v1h-1zM38 719h1v1h-1zM38 726h1v1h-1zM38 753h1v1h-1zM38 755h1v1h-1zM38 765h1v1h-1zM39 384h1v1h-1zM39 394h1v1h-1zM39 463h1v1h-1zM39 493h1v1h-1zM39 496h1v1h-1zM39 530h1v1h-1zM39 545h1v1h-1zM39 548h1v1h-1zM39 557h1v1h-1zM39 558h1v1h-1zM39 566h1v1h-1zM39 587h1v1h-1zM39 666h1v1h-1zM39 679h1v1h-1zM39 682h1v1h-1zM39 685h1v1h-1zM39 723h1v1h-1zM39 725h1v1h-1zM39 756h1v1h-1zM40 378h1v1h-1zM40 382h1v1h-1zM40 391h1v1h-1zM40 394h1v1h-1zM40 396h1v1h-1zM40 421h1v1h-1zM40 455h1v1h-1zM40 489h1v1h-1zM40 548h1v1h-1zM40 553h1v1h-1zM40 554h1v1h-1zM40 557h1v1h-1zM40 558h1v1h-1zM40 560h1v1h-1zM40 601h1v1h-1zM40 637h1v1h-1zM40 666h1v1h-1zM40 667h1v1h-1zM40 669h1v1h-1zM40 670h1v1h-1zM40 680h1v1h-1zM40 711h1v1h-1zM40 721h1v1h-1zM40 753h1v1h-1zM41 419h1v1h-1zM41 471h1v1h-1zM41 491h1v1h-1zM41 494h1v1h-1zM41 500h1v1h-1zM41 502h1v1h-1zM41 544h1v1h-1zM41 555h1v1h-1zM41 558h1v1h-1zM41 606h1v1h-1zM41 643h1v1h-1zM41 672h1v1h-1zM41 675h1v1h-1zM41 683h1v1h-1zM41 717h1v1h-1zM41 756h1v1h-1zM41 759h1v1h-1zM42 373h1v1h-1zM42 391h1v1h-1zM42 395h1v1h-1zM42 456h1v1h-1zM42 502h1v1h-1zM42 505h1v1h-1zM42 546h1v1h-1zM42 557h1v1h-1zM42 590h1v1h-1zM42 598h1v1h-1zM42 599h1v1h-1zM42 600h1v1h-1zM42 631h1v1h-1zM42 666h1v1h-1zM42 763h1v1h-1zM42 764h1v1h-1zM43 424h1v1h-1zM43 425h1v1h-1zM43 456h1v1h-1zM43 458h1v1h-1zM43 463h1v1h-1zM43 464h1v1h-1zM43 467h1v1h-1zM43 501h1v1h-1zM43 502h1v1h-1zM43 503h1v1h-1zM43 543h1v1h-1zM43 546h1v1h-1zM43 548h1v1h-1zM43 583h1v1h-1zM43 585h1v1h-1zM43 587h1v1h-1zM43 675h1v1h-1zM43 676h1v1h-1zM43 684h1v1h-1zM43 706h1v1h-1zM43 726h1v1h-1zM43 727h1v1h-1zM43 746h1v1h-1zM43 753h1v1h-1zM44 390h1v1h-1zM44 423h1v1h-1zM44 424h1v1h-1zM44 427h1v1h-1zM44 459h1v1h-1zM44 465h1v1h-1zM44 547h1v1h-1zM44 558h1v1h-1zM44 597h1v1h-1zM44 602h1v1h-1zM44 626h1v1h-1zM44 633h1v1h-1zM44 706h1v1h-1zM44 711h1v1h-1zM44 713h1v1h-1zM44 721h1v1h-1zM44 754h1v1h-1zM44 764h1v1h-1zM44 766h1v1h-1zM45 427h1v1h-1zM45 428h1v1h-1zM45 559h1v1h-1zM45 565h1v1h-1zM45 625h1v1h-1zM45 630h1v1h-1zM45 685h1v1h-1zM45 706h1v1h-1zM45 711h1v1h-1zM45 721h1v1h-1zM45 725h1v1h-1zM45 748h1v1h-1zM45 750h1v1h-1zM45 758h1v1h-1zM45 762h1v1h-1zM46 392h1v1h-1zM46 423h1v1h-1zM46 551h1v1h-1zM46 553h1v1h-1zM46 628h1v1h-1zM46 631h1v1h-1zM46 704h1v1h-1zM46 713h1v1h-1zM46 716h1v1h-1zM47 394h1v1h-1zM47 458h1v1h-1zM47 462h1v1h-1zM47 502h1v1h-1zM47 534h1v1h-1zM47 547h1v1h-1zM47 560h1v1h-1zM47 600h1v1h-1zM47 742h1v1h-1zM48 393h1v1h-1zM48 459h1v1h-1zM48 464h1v1h-1zM48 549h1v1h-1zM48 562h1v1h-1zM48 680h1v1h-1zM48 751h1v1h-1zM48 757h1v1h-1zM48 767h1v1h-1zM49 393h1v1h-1zM49 396h1v1h-1zM49 397h1v1h-1zM49 421h1v1h-1zM49 466h1v1h-1zM49 498h1v1h-1zM49 545h1v1h-1zM49 546h1v1h-1zM49 548h1v1h-1zM49 554h1v1h-1zM49 596h1v1h-1zM49 624h1v1h-1zM49 681h1v1h-1zM49 685h1v1h-1zM49 720h1v1h-1zM49 752h1v1h-1zM49 761h1v1h-1zM49 767h1v1h-1zM50 392h1v1h-1zM50 394h1v1h-1zM50 403h1v1h-1zM50 416h1v1h-1zM50 463h1v1h-1zM50 496h1v1h-1zM50 561h1v1h-1zM50 625h1v1h-1zM50 626h1v1h-1zM50 630h1v1h-1zM50 632h1v1h-1zM50 720h1v1h-1zM50 722h1v1h-1zM50 748h1v1h-1zM51 421h1v1h-1zM51 422h1v1h-1zM51 424h1v1h-1zM51 501h1v1h-1zM51 547h1v1h-1zM51 548h1v1h-1zM51 558h1v1h-1zM51 603h1v1h-1zM51 621h1v1h-1zM51 625h1v1h-1zM51 626h1v1h-1zM51 677h1v1h-1zM51 686h1v1h-1zM51 726h1v1h-1zM51 751h1v1h-1zM52 398h1v1h-1zM52 426h1v1h-1zM52 502h1v1h-1zM52 503h1v1h-1zM52 560h1v1h-1zM52 600h1v1h-1zM52 625h1v1h-1zM52 630h1v1h-1zM52 682h1v1h-1zM52 727h1v1h-1zM52 750h1v1h-1zM52 760h1v1h-1zM52 767h1v1h-1zM53 392h1v1h-1zM53 397h1v1h-1zM53 399h1v1h-1zM53 424h1v1h-1zM53 457h1v1h-1zM53 459h1v1h-1zM53 468h1v1h-1zM53 624h1v1h-1zM53 631h1v1h-1zM53 724h1v1h-1zM53 752h1v1h-1zM53 755h1v1h-1zM53 762h1v1h-1zM53 767h1v1h-1zM54 394h1v1h-1zM54 425h1v1h-1zM54 426h1v1h-1zM54 431h1v1h-1zM54 455h1v1h-1zM54 464h1v1h-1zM54 509h1v1h-1zM54 622h1v1h-1zM54 682h1v1h-1zM54 718h1v1h-1zM54 751h1v1h-1zM54 765h1v1h-1zM55 398h1v1h-1zM55 403h1v1h-1zM55 425h1v1h-1zM55 544h1v1h-1zM55 546h1v1h-1zM55 548h1v1h-1zM55 556h1v1h-1zM55 637h1v1h-1zM55 722h1v1h-1zM55 759h1v1h-1zM55 760h1v1h-1zM55 763h1v1h-1zM56 394h1v1h-1zM56 397h1v1h-1zM56 423h1v1h-1zM56 424h1v1h-1zM56 458h1v1h-1zM56 545h1v1h-1zM56 548h1v1h-1zM56 682h1v1h-1zM56 683h1v1h-1zM56 760h1v1h-1zM56 763h1v1h-1zM57 551h1v1h-1zM57 624h1v1h-1zM57 625h1v1h-1zM57 632h1v1h-1zM57 685h1v1h-1zM57 722h1v1h-1zM57 765h1v1h-1zM58 390h1v1h-1zM58 392h1v1h-1zM58 420h1v1h-1zM58 425h1v1h-1zM58 543h1v1h-1zM58 630h1v1h-1zM58 631h1v1h-1zM58 720h1v1h-1zM58 761h1v1h-1zM58 764h1v1h-1zM59 388h1v1h-1zM59 547h1v1h-1zM59 626h1v1h-1zM59 683h1v1h-1zM59 684h1v1h-1zM59 764h1v1h-1zM60 391h1v1h-1zM60 418h1v1h-1zM60 764h1v1h-1zM61 389h1v1h-1zM61 629h1v1h-1zM61 687h1v1h-1zM61 719h1v1h-1zM61 761h1v1h-1zM62 398h1v1h-1zM62 422h1v1h-1zM62 424h1v1h-1zM62 540h1v1h-1zM62 544h1v1h-1zM62 630h1v1h-1zM62 632h1v1h-1zM62 677h1v1h-1zM62 683h1v1h-1zM62 760h1v1h-1zM62 762h1v1h-1zM62 763h1v1h-1zM63 542h1v1h-1zM63 544h1v1h-1zM63 547h1v1h-1zM63 631h1v1h-1zM63 676h1v1h-1zM63 680h1v1h-1zM63 766h1v1h-1zM64 390h1v1h-1zM64 394h1v1h-1zM64 396h1v1h-1zM64 397h1v1h-1zM64 400h1v1h-1zM64 416h1v1h-1zM64 623h1v1h-1zM64 628h1v1h-1zM64 686h1v1h-1zM64 687h1v1h-1zM64 757h1v1h-1zM64 759h1v1h-1zM65 415h1v1h-1zM65 422h1v1h-1zM65 770h1v1h-1zM66 420h1v1h-1zM66 546h1v1h-1zM66 547h1v1h-1zM66 757h1v1h-1zM67 394h1v1h-1zM67 397h1v1h-1zM67 422h1v1h-1zM67 547h1v1h-1zM67 677h1v1h-1zM68 395h1v1h-1zM68 416h1v1h-1zM68 424h1v1h-1zM68 425h1v1h-1zM68 543h1v1h-1zM68 548h1v1h-1zM69 399h1v1h-1zM69 421h1v1h-1zM69 427h1v1h-1zM69 543h1v1h-1zM69 545h1v1h-1zM69 546h1v1h-1zM69 680h1v1h-1zM70 398h1v1h-1zM70 679h1v1h-1zM71 422h1v1h-1zM71 545h1v1h-1zM73 423h1v1h-1zM73 424h1v1h-1zM73 426h1v1h-1zM73 540h1v1h-1zM73 545h1v1h-1zM75 539h1v1h-1zM76 419h1v1h-1zM76 423h1v1h-1zM77 417h1v1h-1zM77 551h1v1h-1zM80 425h1v1h-1zM81 427h1v1h-1z"/><path fill="#1d6cd2" d="M7 418h1v1h-1zM7 488h1v1h-1zM7 757h1v1h-1zM7 761h1v1h-1zM8 424h1v1h-1zM8 426h1v1h-1zM8 501h1v1h-1zM8 545h1v1h-1zM8 632h1v1h-1zM8 750h1v1h-1zM9 376h1v1h-1zM9 386h1v1h-1zM9 420h1v1h-1zM9 422h1v1h-1zM9 424h1v1h-1zM9 444h1v1h-1zM9 450h1v1h-1zM9 457h1v1h-1zM9 462h1v1h-1zM9 493h1v1h-1zM9 673h1v1h-1zM9 745h1v1h-1zM9 748h1v1h-1zM9 751h1v1h-1zM9 762h1v1h-1zM10 426h1v1h-1zM10 452h1v1h-1zM10 454h1v1h-1zM10 457h1v1h-1zM10 465h1v1h-1zM10 466h1v1h-1zM10 486h1v1h-1zM10 503h1v1h-1zM10 530h1v1h-1zM10 545h1v1h-1zM10 582h1v1h-1zM10 584h1v1h-1zM10 587h1v1h-1zM10 619h1v1h-1zM10 626h1v1h-1zM10 629h1v1h-1zM10 631h1v1h-1zM10 643h1v1h-1zM10 659h1v1h-1zM10 668h1v1h-1zM10 676h1v1h-1zM10 758h1v1h-1zM11 378h1v1h-1zM11 382h1v1h-1zM11 392h1v1h-1zM11 419h1v1h-1zM11 490h1v1h-1zM11 493h1v1h-1zM11 503h1v1h-1zM11 559h1v1h-1zM11 585h1v1h-1zM11 586h1v1h-1zM11 592h1v1h-1zM11 599h1v1h-1zM11 636h1v1h-1zM11 640h1v1h-1zM11 644h1v1h-1zM11 685h1v1h-1zM11 712h1v1h-1zM11 750h1v1h-1zM11 759h1v1h-1zM12 393h1v1h-1zM12 427h1v1h-1zM12 455h1v1h-1zM12 488h1v1h-1zM12 506h1v1h-1zM12 548h1v1h-1zM12 586h1v1h-1zM12 627h1v1h-1zM12 630h1v1h-1zM12 631h1v1h-1zM12 636h1v1h-1zM12 637h1v1h-1zM12 641h1v1h-1zM12 660h1v1h-1zM12 673h1v1h-1zM12 682h1v1h-1zM12 687h1v1h-1zM12 742h1v1h-1zM12 745h1v1h-1zM13 376h1v1h-1zM13 382h1v1h-1zM13 423h1v1h-1zM13 461h1v1h-1zM13 502h1v1h-1zM13 506h1v1h-1zM13 537h1v1h-1zM13 543h1v1h-1zM13 544h1v1h-1zM13 583h1v1h-1zM13 621h1v1h-1zM13 623h1v1h-1zM13 641h1v1h-1zM13 660h1v1h-1zM13 680h1v1h-1zM13 705h1v1h-1zM13 706h1v1h-1zM13 717h1v1h-1zM13 720h1v1h-1zM13 745h1v1h-1zM13 763h1v1h-1zM14 375h1v1h-1zM14 384h1v1h-1zM14 499h1v1h-1zM14 504h1v1h-1zM14 535h1v1h-1zM14 583h1v1h-1zM14 602h1v1h-1zM14 622h1v1h-1zM14 643h1v1h-1zM14 644h1v1h-1zM14 685h1v1h-1zM14 706h1v1h-1zM14 716h1v1h-1zM14 754h1v1h-1zM14 761h1v1h-1zM15 395h1v1h-1zM15 452h1v1h-1zM15 460h1v1h-1zM15 496h1v1h-1zM15 530h1v1h-1zM15 532h1v1h-1zM15 584h1v1h-1zM15 599h1v1h-1zM15 633h1v1h-1zM15 726h1v1h-1zM15 759h1v1h-1zM15 761h1v1h-1zM15 764h1v1h-1zM15 766h1v1h-1zM15 768h1v1h-1zM16 382h1v1h-1zM16 389h1v1h-1zM16 451h1v1h-1zM16 465h1v1h-1zM16 528h1v1h-1zM16 531h1v1h-1zM16 540h1v1h-1zM16 557h1v1h-1zM16 561h1v1h-1zM16 625h1v1h-1zM16 667h1v1h-1zM16 670h1v1h-1zM16 704h1v1h-1zM16 705h1v1h-1zM16 721h1v1h-1zM16 760h1v1h-1zM17 396h1v1h-1zM17 416h1v1h-1zM17 418h1v1h-1zM17 422h1v1h-1zM17 449h1v1h-1zM17 465h1v1h-1zM17 526h1v1h-1zM17 528h1v1h-1zM17 533h1v1h-1zM17 534h1v1h-1zM17 544h1v1h-1zM17 588h1v1h-1zM17 595h1v1h-1zM17 622h1v1h-1zM17 627h1v1h-1zM17 628h1v1h-1zM17 633h1v1h-1zM17 648h1v1h-1zM17 671h1v1h-1zM17 675h1v1h-1zM17 708h1v1h-1zM17 720h1v1h-1zM17 726h1v1h-1zM17 754h1v1h-1zM18 374h1v1h-1zM18 382h1v1h-1zM18 387h1v1h-1zM18 417h1v1h-1zM18 424h1v1h-1zM18 448h1v1h-1zM18 462h1v1h-1zM18 530h1v1h-1zM18 553h1v1h-1zM18 582h1v1h-1zM18 595h1v1h-1zM18 644h1v1h-1zM18 680h1v1h-1zM18 682h1v1h-1zM18 685h1v1h-1zM18 724h1v1h-1zM19 385h1v1h-1zM19 391h1v1h-1zM19 450h1v1h-1zM19 452h1v1h-1zM19 461h1v1h-1zM19 462h1v1h-1zM19 492h1v1h-1zM19 544h1v1h-1zM19 545h1v1h-1zM19 546h1v1h-1zM19 557h1v1h-1zM19 588h1v1h-1zM19 629h1v1h-1zM19 640h1v1h-1zM19 676h1v1h-1zM19 679h1v1h-1zM19 682h1v1h-1zM19 710h1v1h-1zM19 712h1v1h-1zM19 719h1v1h-1zM19 722h1v1h-1zM19 746h1v1h-1zM19 765h1v1h-1zM20 379h1v1h-1zM20 383h1v1h-1zM20 415h1v1h-1zM20 418h1v1h-1zM20 426h1v1h-1zM20 447h1v1h-1zM20 459h1v1h-1zM20 461h1v1h-1zM20 462h1v1h-1zM20 465h1v1h-1zM20 493h1v1h-1zM20 502h1v1h-1zM20 506h1v1h-1zM20 580h1v1h-1zM20 587h1v1h-1zM20 596h1v1h-1zM20 641h1v1h-1zM20 668h1v1h-1zM20 680h1v1h-1zM20 708h1v1h-1zM20 723h1v1h-1zM20 729h1v1h-1zM20 754h1v1h-1zM20 763h1v1h-1zM21 392h1v1h-1zM21 397h1v1h-1zM21 493h1v1h-1zM21 528h1v1h-1zM21 532h1v1h-1zM21 546h1v1h-1zM21 583h1v1h-1zM21 586h1v1h-1zM21 588h1v1h-1zM21 608h1v1h-1zM21 631h1v1h-1zM21 667h1v1h-1zM21 670h1v1h-1zM21 711h1v1h-1zM21 764h1v1h-1zM22 391h1v1h-1zM22 449h1v1h-1zM22 462h1v1h-1zM22 485h1v1h-1zM22 490h1v1h-1zM22 491h1v1h-1zM22 495h1v1h-1zM22 535h1v1h-1zM22 552h1v1h-1zM22 564h1v1h-1zM22 603h1v1h-1zM22 606h1v1h-1zM22 628h1v1h-1zM22 632h1v1h-1zM22 666h1v1h-1zM22 669h1v1h-1zM22 710h1v1h-1zM22 717h1v1h-1zM22 725h1v1h-1zM22 746h1v1h-1zM22 758h1v1h-1zM22 762h1v1h-1zM22 766h1v1h-1zM23 398h1v1h-1zM23 447h1v1h-1zM23 458h1v1h-1zM23 504h1v1h-1zM23 544h1v1h-1zM23 587h1v1h-1zM23 604h1v1h-1zM23 639h1v1h-1zM23 641h1v1h-1zM23 642h1v1h-1zM23 643h1v1h-1zM23 665h1v1h-1zM23 677h1v1h-1zM23 715h1v1h-1zM23 719h1v1h-1zM23 761h1v1h-1zM24 396h1v1h-1zM24 425h1v1h-1zM24 448h1v1h-1zM24 494h1v1h-1zM24 506h1v1h-1zM24 531h1v1h-1zM24 584h1v1h-1zM24 597h1v1h-1zM24 621h1v1h-1zM24 668h1v1h-1zM24 672h1v1h-1zM24 708h1v1h-1zM24 712h1v1h-1zM24 718h1v1h-1zM24 724h1v1h-1zM24 725h1v1h-1zM24 750h1v1h-1zM24 752h1v1h-1zM24 762h1v1h-1zM24 763h1v1h-1zM24 765h1v1h-1zM25 383h1v1h-1zM25 395h1v1h-1zM25 422h1v1h-1zM25 428h1v1h-1zM25 466h1v1h-1zM25 536h1v1h-1zM25 542h1v1h-1zM25 544h1v1h-1zM25 558h1v1h-1zM25 595h1v1h-1zM25 597h1v1h-1zM25 603h1v1h-1zM25 622h1v1h-1zM25 631h1v1h-1zM25 645h1v1h-1zM25 680h1v1h-1zM25 711h1v1h-1zM25 723h1v1h-1zM25 727h1v1h-1zM26 422h1v1h-1zM26 461h1v1h-1zM26 502h1v1h-1zM26 541h1v1h-1zM26 559h1v1h-1zM26 563h1v1h-1zM26 599h1v1h-1zM26 622h1v1h-1zM26 639h1v1h-1zM26 644h1v1h-1zM26 669h1v1h-1zM26 684h1v1h-1zM26 685h1v1h-1zM26 688h1v1h-1zM26 712h1v1h-1zM26 722h1v1h-1zM26 723h1v1h-1zM26 750h1v1h-1zM27 380h1v1h-1zM27 389h1v1h-1zM27 427h1v1h-1zM27 429h1v1h-1zM27 557h1v1h-1zM27 586h1v1h-1zM27 596h1v1h-1zM27 603h1v1h-1zM27 628h1v1h-1zM27 629h1v1h-1zM27 667h1v1h-1zM27 673h1v1h-1zM27 680h1v1h-1zM27 684h1v1h-1zM27 689h1v1h-1zM27 690h1v1h-1zM27 754h1v1h-1zM28 376h1v1h-1zM28 377h1v1h-1zM28 390h1v1h-1zM28 396h1v1h-1zM28 489h1v1h-1zM28 501h1v1h-1zM28 530h1v1h-1zM28 582h1v1h-1zM28 585h1v1h-1zM28 602h1v1h-1zM28 622h1v1h-1zM28 625h1v1h-1zM28 628h1v1h-1zM28 720h1v1h-1zM28 752h1v1h-1zM29 384h1v1h-1zM29 394h1v1h-1zM29 395h1v1h-1zM29 424h1v1h-1zM29 490h1v1h-1zM29 491h1v1h-1zM29 541h1v1h-1zM29 558h1v1h-1zM29 604h1v1h-1zM29 623h1v1h-1zM29 686h1v1h-1zM29 753h1v1h-1zM29 755h1v1h-1zM29 761h1v1h-1zM30 380h1v1h-1zM30 382h1v1h-1zM30 394h1v1h-1zM30 395h1v1h-1zM30 445h1v1h-1zM30 448h1v1h-1zM30 490h1v1h-1zM30 548h1v1h-1zM30 582h1v1h-1zM30 628h1v1h-1zM30 629h1v1h-1zM30 632h1v1h-1zM30 644h1v1h-1zM30 662h1v1h-1zM30 670h1v1h-1zM30 679h1v1h-1zM30 687h1v1h-1zM30 714h1v1h-1zM30 715h1v1h-1zM30 719h1v1h-1zM30 750h1v1h-1zM30 753h1v1h-1zM30 762h1v1h-1zM30 763h1v1h-1zM31 384h1v1h-1zM31 425h1v1h-1zM31 426h1v1h-1zM31 450h1v1h-1zM31 460h1v1h-1zM31 462h1v1h-1zM31 464h1v1h-1zM31 505h1v1h-1zM31 530h1v1h-1zM31 536h1v1h-1zM31 622h1v1h-1zM31 627h1v1h-1zM31 671h1v1h-1zM31 709h1v1h-1zM31 716h1v1h-1zM31 717h1v1h-1zM31 746h1v1h-1zM31 766h1v1h-1zM32 376h1v1h-1zM32 389h1v1h-1zM32 396h1v1h-1zM32 398h1v1h-1zM32 452h1v1h-1zM32 488h1v1h-1zM32 495h1v1h-1zM32 530h1v1h-1zM32 533h1v1h-1zM32 534h1v1h-1zM32 535h1v1h-1zM32 541h1v1h-1zM32 549h1v1h-1zM32 557h1v1h-1zM32 558h1v1h-1zM32 585h1v1h-1zM32 588h1v1h-1zM32 590h1v1h-1zM32 626h1v1h-1zM32 631h1v1h-1zM32 644h1v1h-1zM32 750h1v1h-1zM32 762h1v1h-1zM32 764h1v1h-1zM33 381h1v1h-1zM33 391h1v1h-1zM33 397h1v1h-1zM33 423h1v1h-1zM33 452h1v1h-1zM33 457h1v1h-1zM33 494h1v1h-1zM33 530h1v1h-1zM33 534h1v1h-1zM33 545h1v1h-1zM33 559h1v1h-1zM33 589h1v1h-1zM33 603h1v1h-1zM33 628h1v1h-1zM33 630h1v1h-1zM33 638h1v1h-1zM33 645h1v1h-1zM33 668h1v1h-1zM33 719h1v1h-1zM33 720h1v1h-1zM33 753h1v1h-1zM34 377h1v1h-1zM34 380h1v1h-1zM34 421h1v1h-1zM34 488h1v1h-1zM34 536h1v1h-1zM34 541h1v1h-1zM34 587h1v1h-1zM34 618h1v1h-1zM34 632h1v1h-1zM34 641h1v1h-1zM34 671h1v1h-1zM34 683h1v1h-1zM34 725h1v1h-1zM34 751h1v1h-1zM34 759h1v1h-1zM35 382h1v1h-1zM35 395h1v1h-1zM35 402h1v1h-1zM35 447h1v1h-1zM35 449h1v1h-1zM35 485h1v1h-1zM35 491h1v1h-1zM35 493h1v1h-1zM35 507h1v1h-1zM35 532h1v1h-1zM35 544h1v1h-1zM35 554h1v1h-1zM35 563h1v1h-1zM35 592h1v1h-1zM35 643h1v1h-1zM35 662h1v1h-1zM35 664h1v1h-1zM35 667h1v1h-1zM35 683h1v1h-1zM35 712h1v1h-1zM35 714h1v1h-1zM35 722h1v1h-1zM35 725h1v1h-1zM35 752h1v1h-1zM35 754h1v1h-1zM35 758h1v1h-1zM35 765h1v1h-1zM36 401h1v1h-1zM36 468h1v1h-1zM36 491h1v1h-1zM36 545h1v1h-1zM36 546h1v1h-1zM36 547h1v1h-1zM36 560h1v1h-1zM36 585h1v1h-1zM36 604h1v1h-1zM36 643h1v1h-1zM36 666h1v1h-1zM36 677h1v1h-1zM36 722h1v1h-1zM36 749h1v1h-1zM36 755h1v1h-1zM37 393h1v1h-1zM37 451h1v1h-1zM37 487h1v1h-1zM37 533h1v1h-1zM37 558h1v1h-1zM37 559h1v1h-1zM37 597h1v1h-1zM37 629h1v1h-1zM37 672h1v1h-1zM37 758h1v1h-1zM37 762h1v1h-1zM37 769h1v1h-1zM38 377h1v1h-1zM38 392h1v1h-1zM38 416h1v1h-1zM38 423h1v1h-1zM38 447h1v1h-1zM38 530h1v1h-1zM38 531h1v1h-1zM38 557h1v1h-1zM38 558h1v1h-1zM38 562h1v1h-1zM38 563h1v1h-1zM38 585h1v1h-1zM38 625h1v1h-1zM38 633h1v1h-1zM38 640h1v1h-1zM38 666h1v1h-1zM38 669h1v1h-1zM38 710h1v1h-1zM38 722h1v1h-1zM38 750h1v1h-1zM38 764h1v1h-1zM39 373h1v1h-1zM39 385h1v1h-1zM39 532h1v1h-1zM39 549h1v1h-1zM39 587h1v1h-1zM39 624h1v1h-1zM39 625h1v1h-1zM39 628h1v1h-1zM39 640h1v1h-1zM39 669h1v1h-1zM39 680h1v1h-1zM39 707h1v1h-1zM39 715h1v1h-1zM39 720h1v1h-1zM39 724h1v1h-1zM39 748h1v1h-1zM39 752h1v1h-1zM39 756h1v1h-1zM39 759h1v1h-1zM40 376h1v1h-1zM40 452h1v1h-1zM40 459h1v1h-1zM40 494h1v1h-1zM40 499h1v1h-1zM40 501h1v1h-1zM40 507h1v1h-1zM40 535h1v1h-1zM40 557h1v1h-1zM40 558h1v1h-1zM40 563h1v1h-1zM40 628h1v1h-1zM40 630h1v1h-1zM40 640h1v1h-1zM40 646h1v1h-1zM40 676h1v1h-1zM40 679h1v1h-1zM40 714h1v1h-1zM40 757h1v1h-1zM41 384h1v1h-1zM41 385h1v1h-1zM41 397h1v1h-1zM41 419h1v1h-1zM41 463h1v1h-1zM41 464h1v1h-1zM41 465h1v1h-1zM41 588h1v1h-1zM41 596h1v1h-1zM41 623h1v1h-1zM41 678h1v1h-1zM41 723h1v1h-1zM41 750h1v1h-1zM41 752h1v1h-1zM41 760h1v1h-1zM41 765h1v1h-1zM42 375h1v1h-1zM42 378h1v1h-1zM42 384h1v1h-1zM42 417h1v1h-1zM42 420h1v1h-1zM42 425h1v1h-1zM42 461h1v1h-1zM42 503h1v1h-1zM42 505h1v1h-1zM42 508h1v1h-1zM42 584h1v1h-1zM42 627h1v1h-1zM42 640h1v1h-1zM42 681h1v1h-1zM42 687h1v1h-1zM42 706h1v1h-1zM42 712h1v1h-1zM42 722h1v1h-1zM42 726h1v1h-1zM42 749h1v1h-1zM42 754h1v1h-1zM42 763h1v1h-1zM42 765h1v1h-1zM42 766h1v1h-1zM42 767h1v1h-1zM43 382h1v1h-1zM43 398h1v1h-1zM43 465h1v1h-1zM43 492h1v1h-1zM43 506h1v1h-1zM43 542h1v1h-1zM43 543h1v1h-1zM43 547h1v1h-1zM43 553h1v1h-1zM43 587h1v1h-1zM43 598h1v1h-1zM43 673h1v1h-1zM43 676h1v1h-1zM43 702h1v1h-1zM43 704h1v1h-1zM43 728h1v1h-1zM43 760h1v1h-1zM43 764h1v1h-1zM43 766h1v1h-1zM44 391h1v1h-1zM44 420h1v1h-1zM44 463h1v1h-1zM44 503h1v1h-1zM44 585h1v1h-1zM44 599h1v1h-1zM44 602h1v1h-1zM44 633h1v1h-1zM44 704h1v1h-1zM44 719h1v1h-1zM44 753h1v1h-1zM44 763h1v1h-1zM45 396h1v1h-1zM45 462h1v1h-1zM45 501h1v1h-1zM45 560h1v1h-1zM45 601h1v1h-1zM45 627h1v1h-1zM45 630h1v1h-1zM45 707h1v1h-1zM45 719h1v1h-1zM45 725h1v1h-1zM45 758h1v1h-1zM45 759h1v1h-1zM45 762h1v1h-1zM46 400h1v1h-1zM46 459h1v1h-1zM46 461h1v1h-1zM46 496h1v1h-1zM46 505h1v1h-1zM46 560h1v1h-1zM46 634h1v1h-1zM46 728h1v1h-1zM46 748h1v1h-1zM46 767h1v1h-1zM47 425h1v1h-1zM47 464h1v1h-1zM47 502h1v1h-1zM47 551h1v1h-1zM47 557h1v1h-1zM47 619h1v1h-1zM47 626h1v1h-1zM47 628h1v1h-1zM47 633h1v1h-1zM47 677h1v1h-1zM47 703h1v1h-1zM47 707h1v1h-1zM47 719h1v1h-1zM47 725h1v1h-1zM47 751h1v1h-1zM47 760h1v1h-1zM47 763h1v1h-1zM48 393h1v1h-1zM48 394h1v1h-1zM48 424h1v1h-1zM48 631h1v1h-1zM48 683h1v1h-1zM48 754h1v1h-1zM48 766h1v1h-1zM49 399h1v1h-1zM49 422h1v1h-1zM49 499h1v1h-1zM49 543h1v1h-1zM49 550h1v1h-1zM49 559h1v1h-1zM49 632h1v1h-1zM49 677h1v1h-1zM49 683h1v1h-1zM49 721h1v1h-1zM49 726h1v1h-1zM50 395h1v1h-1zM50 404h1v1h-1zM50 465h1v1h-1zM50 499h1v1h-1zM50 501h1v1h-1zM50 505h1v1h-1zM50 545h1v1h-1zM50 598h1v1h-1zM50 627h1v1h-1zM50 750h1v1h-1zM50 762h1v1h-1zM51 423h1v1h-1zM51 461h1v1h-1zM51 462h1v1h-1zM51 497h1v1h-1zM51 548h1v1h-1zM51 625h1v1h-1zM51 626h1v1h-1zM51 634h1v1h-1zM51 682h1v1h-1zM51 683h1v1h-1zM51 721h1v1h-1zM51 748h1v1h-1zM51 760h1v1h-1zM52 398h1v1h-1zM52 421h1v1h-1zM52 624h1v1h-1zM52 682h1v1h-1zM52 721h1v1h-1zM52 766h1v1h-1zM53 396h1v1h-1zM53 400h1v1h-1zM53 419h1v1h-1zM53 626h1v1h-1zM54 391h1v1h-1zM54 392h1v1h-1zM54 421h1v1h-1zM54 548h1v1h-1zM54 606h1v1h-1zM54 679h1v1h-1zM54 721h1v1h-1zM54 755h1v1h-1zM55 392h1v1h-1zM55 547h1v1h-1zM55 625h1v1h-1zM55 627h1v1h-1zM55 629h1v1h-1zM55 630h1v1h-1zM55 631h1v1h-1zM55 767h1v1h-1zM56 424h1v1h-1zM56 627h1v1h-1zM56 628h1v1h-1zM56 684h1v1h-1zM56 685h1v1h-1zM56 759h1v1h-1zM57 396h1v1h-1zM57 424h1v1h-1zM57 426h1v1h-1zM57 544h1v1h-1zM57 685h1v1h-1zM58 394h1v1h-1zM58 395h1v1h-1zM58 396h1v1h-1zM58 397h1v1h-1zM58 423h1v1h-1zM58 548h1v1h-1zM58 625h1v1h-1zM58 684h1v1h-1zM58 725h1v1h-1zM58 763h1v1h-1zM58 769h1v1h-1zM59 418h1v1h-1zM59 626h1v1h-1zM59 679h1v1h-1zM59 680h1v1h-1zM59 762h1v1h-1zM60 541h1v1h-1zM60 763h1v1h-1zM61 397h1v1h-1zM61 546h1v1h-1zM61 627h1v1h-1zM61 762h1v1h-1zM61 766h1v1h-1zM62 396h1v1h-1zM62 398h1v1h-1zM62 626h1v1h-1zM62 682h1v1h-1zM63 389h1v1h-1zM63 538h1v1h-1zM63 631h1v1h-1zM63 679h1v1h-1zM63 682h1v1h-1zM63 759h1v1h-1zM63 766h1v1h-1zM64 394h1v1h-1zM64 414h1v1h-1zM64 417h1v1h-1zM64 624h1v1h-1zM64 627h1v1h-1zM64 678h1v1h-1zM64 764h1v1h-1zM65 395h1v1h-1zM65 544h1v1h-1zM65 632h1v1h-1zM66 416h1v1h-1zM66 426h1v1h-1zM66 427h1v1h-1zM66 544h1v1h-1zM66 545h1v1h-1zM66 548h1v1h-1zM66 719h1v1h-1zM66 758h1v1h-1zM67 678h1v1h-1zM67 682h1v1h-1zM67 763h1v1h-1zM68 398h1v1h-1zM68 423h1v1h-1zM68 683h1v1h-1zM69 392h1v1h-1zM69 393h1v1h-1zM69 413h1v1h-1zM69 547h1v1h-1zM70 419h1v1h-1zM70 547h1v1h-1zM70 630h1v1h-1zM71 395h1v1h-1zM71 542h1v1h-1zM72 421h1v1h-1zM72 424h1v1h-1zM72 427h1v1h-1zM72 545h1v1h-1zM73 419h1v1h-1zM73 538h1v1h-1zM73 547h1v1h-1zM74 423h1v1h-1zM74 549h1v1h-1zM75 387h1v1h-1zM75 420h1v1h-1zM75 540h1v1h-1zM75 544h1v1h-1zM75 547h1v1h-1zM76 416h1v1h-1zM76 423h1v1h-1zM77 420h1v1h-1zM77 548h1v1h-1zM78 418h1v1h-1zM78 420h1v1h-1zM79 422h1v1h-1zM80 422h1v1h-1zM80 423h1v1h-1zM81 419h1v1h-1zM81 425h1v1h-1zM82 420h1v1h-1zM85 425h1v1h-1z"/><path fill="#36b6f2" d="M7 384h1v1h-1zM8 527h1v1h-1zM8 579h1v1h-1zM8 666h1v1h-1zM8 678h1v1h-1zM8 757h1v1h-1zM8 763h1v1h-1zM8 771h1v1h-1zM9 390h1v1h-1zM9 543h1v1h-1zM9 558h1v1h-1zM9 583h1v1h-1zM9 756h1v1h-1zM9 757h1v1h-1zM10 384h1v1h-1zM10 630h1v1h-1zM10 704h1v1h-1zM10 764h1v1h-1zM11 494h1v1h-1zM11 671h1v1h-1zM11 679h1v1h-1zM11 681h1v1h-1zM11 765h1v1h-1zM12 380h1v1h-1zM12 396h1v1h-1zM12 398h1v1h-1zM12 460h1v1h-1zM12 500h1v1h-1zM12 502h1v1h-1zM12 560h1v1h-1zM12 601h1v1h-1zM12 644h1v1h-1zM13 382h1v1h-1zM13 384h1v1h-1zM13 388h1v1h-1zM13 389h1v1h-1zM13 392h1v1h-1zM13 460h1v1h-1zM13 461h1v1h-1zM13 555h1v1h-1zM13 629h1v1h-1zM13 634h1v1h-1zM13 678h1v1h-1zM13 681h1v1h-1zM13 711h1v1h-1zM13 722h1v1h-1zM13 751h1v1h-1zM14 381h1v1h-1zM14 382h1v1h-1zM14 417h1v1h-1zM14 419h1v1h-1zM14 444h1v1h-1zM14 448h1v1h-1zM14 485h1v1h-1zM14 553h1v1h-1zM14 626h1v1h-1zM14 630h1v1h-1zM14 683h1v1h-1zM14 765h1v1h-1zM15 442h1v1h-1zM15 449h1v1h-1zM15 456h1v1h-1zM15 467h1v1h-1zM15 541h1v1h-1zM15 546h1v1h-1zM15 645h1v1h-1zM15 660h1v1h-1zM15 661h1v1h-1zM15 665h1v1h-1zM15 682h1v1h-1zM15 684h1v1h-1zM15 710h1v1h-1zM15 713h1v1h-1zM15 752h1v1h-1zM15 753h1v1h-1zM16 395h1v1h-1zM16 444h1v1h-1zM16 454h1v1h-1zM16 455h1v1h-1zM16 562h1v1h-1zM16 581h1v1h-1zM16 589h1v1h-1zM16 594h1v1h-1zM16 627h1v1h-1zM16 713h1v1h-1zM16 718h1v1h-1zM16 747h1v1h-1zM16 763h1v1h-1zM17 427h1v1h-1zM17 445h1v1h-1zM17 457h1v1h-1zM17 462h1v1h-1zM17 590h1v1h-1zM17 722h1v1h-1zM18 422h1v1h-1zM18 494h1v1h-1zM18 585h1v1h-1zM18 586h1v1h-1zM18 587h1v1h-1zM18 669h1v1h-1zM18 671h1v1h-1zM18 720h1v1h-1zM18 757h1v1h-1zM19 383h1v1h-1zM19 423h1v1h-1zM19 487h1v1h-1zM19 531h1v1h-1zM19 556h1v1h-1zM19 640h1v1h-1zM19 647h1v1h-1zM19 680h1v1h-1zM19 685h1v1h-1zM20 420h1v1h-1zM20 458h1v1h-1zM20 461h1v1h-1zM20 492h1v1h-1zM20 503h1v1h-1zM20 557h1v1h-1zM20 627h1v1h-1zM20 712h1v1h-1zM20 728h1v1h-1zM20 766h1v1h-1zM21 381h1v1h-1zM21 425h1v1h-1zM21 533h1v1h-1zM21 544h1v1h-1zM21 548h1v1h-1zM21 577h1v1h-1zM21 674h1v1h-1zM21 706h1v1h-1zM21 723h1v1h-1zM21 752h1v1h-1zM22 461h1v1h-1zM22 627h1v1h-1zM22 763h1v1h-1zM23 445h1v1h-1zM23 451h1v1h-1zM23 494h1v1h-1zM23 556h1v1h-1zM23 670h1v1h-1zM23 682h1v1h-1zM23 705h1v1h-1zM24 379h1v1h-1zM24 386h1v1h-1zM24 417h1v1h-1zM24 425h1v1h-1zM24 426h1v1h-1zM24 489h1v1h-1zM24 561h1v1h-1zM24 602h1v1h-1zM24 628h1v1h-1zM24 639h1v1h-1zM24 641h1v1h-1zM24 669h1v1h-1zM24 707h1v1h-1zM24 714h1v1h-1zM24 718h1v1h-1zM24 752h1v1h-1zM25 391h1v1h-1zM25 491h1v1h-1zM25 503h1v1h-1zM25 546h1v1h-1zM25 562h1v1h-1zM25 590h1v1h-1zM25 625h1v1h-1zM25 644h1v1h-1zM25 707h1v1h-1zM25 752h1v1h-1zM27 447h1v1h-1zM27 463h1v1h-1zM27 464h1v1h-1zM27 466h1v1h-1zM27 534h1v1h-1zM27 587h1v1h-1zM27 677h1v1h-1zM27 715h1v1h-1zM28 467h1v1h-1zM28 502h1v1h-1zM28 504h1v1h-1zM28 505h1v1h-1zM28 530h1v1h-1zM28 588h1v1h-1zM28 591h1v1h-1zM28 597h1v1h-1zM28 666h1v1h-1zM28 752h1v1h-1zM28 764h1v1h-1zM29 388h1v1h-1zM29 495h1v1h-1zM29 619h1v1h-1zM29 760h1v1h-1zM29 764h1v1h-1zM30 448h1v1h-1zM30 462h1v1h-1zM30 549h1v1h-1zM30 588h1v1h-1zM31 380h1v1h-1zM31 393h1v1h-1zM31 394h1v1h-1zM31 419h1v1h-1zM31 422h1v1h-1zM31 491h1v1h-1zM31 506h1v1h-1zM31 587h1v1h-1zM31 605h1v1h-1zM31 638h1v1h-1zM32 374h1v1h-1zM32 384h1v1h-1zM32 401h1v1h-1zM32 429h1v1h-1zM32 462h1v1h-1zM32 502h1v1h-1zM32 548h1v1h-1zM32 599h1v1h-1zM32 624h1v1h-1zM32 641h1v1h-1zM32 718h1v1h-1zM33 381h1v1h-1zM33 392h1v1h-1zM33 412h1v1h-1zM33 453h1v1h-1zM33 504h1v1h-1zM33 509h1v1h-1zM33 545h1v1h-1zM33 588h1v1h-1zM33 598h1v1h-1zM33 640h1v1h-1zM33 644h1v1h-1zM33 722h1v1h-1zM33 724h1v1h-1zM33 725h1v1h-1zM33 727h1v1h-1zM34 458h1v1h-1zM34 553h1v1h-1zM34 633h1v1h-1zM34 722h1v1h-1zM35 421h1v1h-1zM35 457h1v1h-1zM35 625h1v1h-1zM35 628h1v1h-1zM35 709h1v1h-1zM35 766h1v1h-1zM36 386h1v1h-1zM36 426h1v1h-1zM36 487h1v1h-1zM36 489h1v1h-1zM36 535h1v1h-1zM36 550h1v1h-1zM36 632h1v1h-1zM36 640h1v1h-1zM36 680h1v1h-1zM36 684h1v1h-1zM36 711h1v1h-1zM36 725h1v1h-1zM36 726h1v1h-1zM37 384h1v1h-1zM37 398h1v1h-1zM37 450h1v1h-1zM37 546h1v1h-1zM37 584h1v1h-1zM37 592h1v1h-1zM37 598h1v1h-1zM37 599h1v1h-1zM37 626h1v1h-1zM37 681h1v1h-1zM37 722h1v1h-1zM37 727h1v1h-1zM38 488h1v1h-1zM38 505h1v1h-1zM38 507h1v1h-1zM38 546h1v1h-1zM38 599h1v1h-1zM38 629h1v1h-1zM38 671h1v1h-1zM38 680h1v1h-1zM38 709h1v1h-1zM39 424h1v1h-1zM39 426h1v1h-1zM39 568h1v1h-1zM39 604h1v1h-1zM39 628h1v1h-1zM39 667h1v1h-1zM39 668h1v1h-1zM39 670h1v1h-1zM39 680h1v1h-1zM39 708h1v1h-1zM39 729h1v1h-1zM39 747h1v1h-1zM40 380h1v1h-1zM40 396h1v1h-1zM40 459h1v1h-1zM40 531h1v1h-1zM40 533h1v1h-1zM40 589h1v1h-1zM40 624h1v1h-1zM40 631h1v1h-1zM40 705h1v1h-1zM41 390h1v1h-1zM41 392h1v1h-1zM41 426h1v1h-1zM41 460h1v1h-1zM41 485h1v1h-1zM41 548h1v1h-1zM41 560h1v1h-1zM41 590h1v1h-1zM41 667h1v1h-1zM41 671h1v1h-1zM41 685h1v1h-1zM42 631h1v1h-1zM43 558h1v1h-1zM43 590h1v1h-1zM43 626h1v1h-1zM43 628h1v1h-1zM43 714h1v1h-1zM43 751h1v1h-1zM43 765h1v1h-1zM44 387h1v1h-1zM44 391h1v1h-1zM44 554h1v1h-1zM44 625h1v1h-1zM44 683h1v1h-1zM44 711h1v1h-1zM44 760h1v1h-1zM44 762h1v1h-1zM45 588h1v1h-1zM45 683h1v1h-1zM45 701h1v1h-1zM45 724h1v1h-1zM46 397h1v1h-1zM46 457h1v1h-1zM46 558h1v1h-1zM46 559h1v1h-1zM46 598h1v1h-1zM47 504h1v1h-1zM47 564h1v1h-1zM47 752h1v1h-1zM48 426h1v1h-1zM48 563h1v1h-1zM48 680h1v1h-1zM48 723h1v1h-1zM49 395h1v1h-1zM49 402h1v1h-1zM49 465h1v1h-1zM49 506h1v1h-1zM49 723h1v1h-1zM49 754h1v1h-1zM49 762h1v1h-1zM50 381h1v1h-1zM50 461h1v1h-1zM50 462h1v1h-1zM50 548h1v1h-1zM50 597h1v1h-1zM50 632h1v1h-1zM50 679h1v1h-1zM50 752h1v1h-1zM50 764h1v1h-1zM51 422h1v1h-1zM51 425h1v1h-1zM51 463h1v1h-1zM51 597h1v1h-1zM51 601h1v1h-1zM51 627h1v1h-1zM51 632h1v1h-1zM51 766h1v1h-1zM52 391h1v1h-1zM52 418h1v1h-1zM52 457h1v1h-1zM52 620h1v1h-1zM52 676h1v1h-1zM52 684h1v1h-1zM52 685h1v1h-1zM53 678h1v1h-1zM53 759h1v1h-1zM53 761h1v1h-1zM53 762h1v1h-1zM54 597h1v1h-1zM54 626h1v1h-1zM54 683h1v1h-1zM55 396h1v1h-1zM55 399h1v1h-1zM55 551h1v1h-1zM56 390h1v1h-1zM56 461h1v1h-1zM56 546h1v1h-1zM56 679h1v1h-1zM57 420h1v1h-1zM58 393h1v1h-1zM58 722h1v1h-1zM58 768h1v1h-1zM59 392h1v1h-1zM59 426h1v1h-1zM59 631h1v1h-1zM60 396h1v1h-1zM60 542h1v1h-1zM60 550h1v1h-1zM61 391h1v1h-1zM61 544h1v1h-1zM61 546h1v1h-1zM62 548h1v1h-1zM62 768h1v1h-1zM63 550h1v1h-1zM64 420h1v1h-1zM64 755h1v1h-1zM65 423h1v1h-1zM65 620h1v1h-1zM65 685h1v1h-1zM66 546h1v1h-1zM66 549h1v1h-1zM68 415h1v1h-1zM68 547h1v1h-1zM68 680h1v1h-1zM69 394h1v1h-1zM70 424h1v1h-1zM73 548h1v1h-1zM75 549h1v1h-1zM76 424h1v1h-1zM79 420h1v1h-1zM79 423h1v1h-1zM79 427h1v1h-1z"/><path fill="#000000" d="M7 581h1v1h-1zM8 527h1v1h-1zM9 378h1v1h-1zM9 450h1v1h-1zM9 459h1v1h-1zM9 466h1v1h-1zM9 491h1v1h-1zM9 531h1v1h-1zM9 545h1v1h-1zM9 587h1v1h-1zM9 630h1v1h-1zM10 382h1v1h-1zM10 416h1v1h-1zM10 451h1v1h-1zM10 542h1v1h-1zM10 585h1v1h-1zM10 686h1v1h-1zM10 705h1v1h-1zM11 449h1v1h-1zM11 458h1v1h-1zM11 460h1v1h-1zM11 465h1v1h-1zM11 539h1v1h-1zM11 603h1v1h-1zM11 622h1v1h-1zM11 623h1v1h-1zM11 641h1v1h-1zM11 680h1v1h-1zM11 742h1v1h-1zM12 419h1v1h-1zM12 421h1v1h-1zM12 462h1v1h-1zM12 546h1v1h-1zM12 629h1v1h-1zM12 677h1v1h-1zM12 681h1v1h-1zM12 683h1v1h-1zM12 722h1v1h-1zM12 764h1v1h-1zM13 397h1v1h-1zM13 534h1v1h-1zM13 555h1v1h-1zM13 577h1v1h-1zM13 677h1v1h-1zM13 710h1v1h-1zM13 716h1v1h-1zM14 420h1v1h-1zM14 492h1v1h-1zM14 560h1v1h-1zM14 563h1v1h-1zM14 627h1v1h-1zM14 670h1v1h-1zM14 710h1v1h-1zM15 399h1v1h-1zM15 460h1v1h-1zM15 464h1v1h-1zM15 486h1v1h-1zM15 559h1v1h-1zM15 631h1v1h-1zM15 672h1v1h-1zM15 680h1v1h-1zM15 710h1v1h-1zM15 719h1v1h-1zM15 748h1v1h-1zM16 446h1v1h-1zM16 447h1v1h-1zM16 454h1v1h-1zM16 460h1v1h-1zM16 465h1v1h-1zM16 527h1v1h-1zM16 591h1v1h-1zM16 595h1v1h-1zM16 709h1v1h-1zM16 750h1v1h-1zM16 761h1v1h-1zM17 392h1v1h-1zM17 398h1v1h-1zM17 447h1v1h-1zM17 490h1v1h-1zM17 556h1v1h-1zM17 597h1v1h-1zM17 598h1v1h-1zM17 625h1v1h-1zM17 644h1v1h-1zM17 681h1v1h-1zM17 684h1v1h-1zM17 707h1v1h-1zM17 713h1v1h-1zM18 391h1v1h-1zM18 464h1v1h-1zM18 549h1v1h-1zM18 728h1v1h-1zM18 748h1v1h-1zM18 750h1v1h-1zM19 506h1v1h-1zM19 528h1v1h-1zM19 537h1v1h-1zM19 553h1v1h-1zM19 555h1v1h-1zM19 559h1v1h-1zM19 598h1v1h-1zM19 669h1v1h-1zM19 710h1v1h-1zM19 711h1v1h-1zM19 722h1v1h-1zM20 423h1v1h-1zM20 459h1v1h-1zM20 464h1v1h-1zM20 558h1v1h-1zM20 666h1v1h-1zM20 722h1v1h-1zM21 380h1v1h-1zM21 489h1v1h-1zM21 529h1v1h-1zM21 596h1v1h-1zM21 602h1v1h-1zM21 645h1v1h-1zM21 682h1v1h-1zM21 685h1v1h-1zM21 712h1v1h-1zM22 379h1v1h-1zM22 424h1v1h-1zM22 442h1v1h-1zM22 488h1v1h-1zM22 560h1v1h-1zM22 561h1v1h-1zM22 584h1v1h-1zM22 598h1v1h-1zM22 599h1v1h-1zM22 623h1v1h-1zM22 640h1v1h-1zM22 644h1v1h-1zM22 671h1v1h-1zM22 722h1v1h-1zM22 764h1v1h-1zM23 395h1v1h-1zM23 400h1v1h-1zM23 454h1v1h-1zM23 487h1v1h-1zM23 500h1v1h-1zM23 557h1v1h-1zM23 559h1v1h-1zM23 598h1v1h-1zM23 667h1v1h-1zM23 669h1v1h-1zM23 673h1v1h-1zM23 705h1v1h-1zM24 397h1v1h-1zM24 448h1v1h-1zM24 483h1v1h-1zM24 485h1v1h-1zM24 547h1v1h-1zM24 548h1v1h-1zM24 636h1v1h-1zM24 640h1v1h-1zM24 703h1v1h-1zM24 711h1v1h-1zM25 394h1v1h-1zM25 396h1v1h-1zM25 546h1v1h-1zM25 556h1v1h-1zM25 560h1v1h-1zM25 646h1v1h-1zM25 673h1v1h-1zM25 689h1v1h-1zM25 709h1v1h-1zM25 710h1v1h-1zM26 393h1v1h-1zM26 585h1v1h-1zM26 591h1v1h-1zM26 714h1v1h-1zM26 716h1v1h-1zM26 718h1v1h-1zM26 722h1v1h-1zM26 750h1v1h-1zM27 394h1v1h-1zM27 398h1v1h-1zM27 501h1v1h-1zM27 530h1v1h-1zM27 668h1v1h-1zM27 713h1v1h-1zM27 752h1v1h-1zM27 756h1v1h-1zM27 763h1v1h-1zM27 766h1v1h-1zM28 382h1v1h-1zM28 391h1v1h-1zM28 393h1v1h-1zM28 493h1v1h-1zM28 531h1v1h-1zM28 557h1v1h-1zM28 687h1v1h-1zM28 714h1v1h-1zM28 716h1v1h-1zM29 394h1v1h-1zM29 420h1v1h-1zM29 422h1v1h-1zM29 547h1v1h-1zM29 622h1v1h-1zM29 640h1v1h-1zM29 768h1v1h-1zM30 386h1v1h-1zM30 388h1v1h-1zM30 546h1v1h-1zM30 602h1v1h-1zM30 664h1v1h-1zM30 669h1v1h-1zM30 768h1v1h-1zM31 393h1v1h-1zM31 446h1v1h-1zM31 461h1v1h-1zM31 489h1v1h-1zM31 498h1v1h-1zM31 532h1v1h-1zM31 561h1v1h-1zM31 587h1v1h-1zM31 645h1v1h-1zM31 750h1v1h-1zM32 385h1v1h-1zM32 457h1v1h-1zM32 461h1v1h-1zM32 466h1v1h-1zM32 544h1v1h-1zM32 550h1v1h-1zM32 584h1v1h-1zM32 592h1v1h-1zM32 622h1v1h-1zM32 664h1v1h-1zM32 726h1v1h-1zM33 507h1v1h-1zM33 562h1v1h-1zM33 628h1v1h-1zM33 671h1v1h-1zM33 712h1v1h-1zM33 719h1v1h-1zM33 750h1v1h-1zM33 753h1v1h-1zM33 763h1v1h-1zM34 494h1v1h-1zM34 505h1v1h-1zM34 548h1v1h-1zM34 586h1v1h-1zM34 628h1v1h-1zM34 661h1v1h-1zM34 669h1v1h-1zM34 682h1v1h-1zM34 710h1v1h-1zM34 756h1v1h-1zM35 372h1v1h-1zM35 456h1v1h-1zM35 493h1v1h-1zM35 534h1v1h-1zM35 585h1v1h-1zM35 592h1v1h-1zM35 682h1v1h-1zM35 725h1v1h-1zM35 752h1v1h-1zM36 489h1v1h-1zM36 490h1v1h-1zM36 536h1v1h-1zM36 624h1v1h-1zM36 668h1v1h-1zM37 424h1v1h-1zM37 446h1v1h-1zM37 464h1v1h-1zM37 503h1v1h-1zM37 536h1v1h-1zM37 624h1v1h-1zM37 639h1v1h-1zM37 667h1v1h-1zM37 671h1v1h-1zM37 711h1v1h-1zM38 380h1v1h-1zM38 425h1v1h-1zM38 448h1v1h-1zM38 637h1v1h-1zM38 753h1v1h-1zM39 385h1v1h-1zM39 397h1v1h-1zM39 450h1v1h-1zM39 454h1v1h-1zM39 463h1v1h-1zM39 641h1v1h-1zM39 673h1v1h-1zM39 685h1v1h-1zM39 714h1v1h-1zM39 748h1v1h-1zM40 421h1v1h-1zM40 464h1v1h-1zM40 488h1v1h-1zM40 492h1v1h-1zM40 494h1v1h-1zM40 501h1v1h-1zM40 558h1v1h-1zM40 684h1v1h-1zM40 710h1v1h-1zM40 717h1v1h-1zM41 378h1v1h-1zM41 381h1v1h-1zM41 421h1v1h-1zM41 461h1v1h-1zM41 712h1v1h-1zM42 376h1v1h-1zM42 383h1v1h-1zM42 384h1v1h-1zM42 466h1v1h-1zM42 549h1v1h-1zM43 421h1v1h-1zM43 552h1v1h-1zM43 626h1v1h-1zM43 631h1v1h-1zM43 632h1v1h-1zM43 683h1v1h-1zM44 603h1v1h-1zM44 680h1v1h-1zM44 685h1v1h-1zM44 714h1v1h-1zM44 761h1v1h-1zM45 544h1v1h-1zM45 631h1v1h-1zM45 632h1v1h-1zM45 681h1v1h-1zM45 757h1v1h-1zM45 758h1v1h-1zM46 378h1v1h-1zM46 503h1v1h-1zM46 636h1v1h-1zM46 682h1v1h-1zM46 712h1v1h-1zM46 722h1v1h-1zM47 504h1v1h-1zM47 506h1v1h-1zM47 548h1v1h-1zM47 767h1v1h-1zM48 460h1v1h-1zM48 504h1v1h-1zM48 544h1v1h-1zM48 636h1v1h-1zM48 712h1v1h-1zM48 719h1v1h-1zM49 454h1v1h-1zM49 503h1v1h-1zM49 603h1v1h-1zM49 722h1v1h-1zM50 403h1v1h-1zM50 456h1v1h-1zM50 724h1v1h-1zM50 750h1v1h-1zM50 754h1v1h-1zM51 393h1v1h-1zM51 428h1v1h-1zM51 753h1v1h-1zM52 397h1v1h-1zM52 544h1v1h-1zM52 545h1v1h-1zM52 677h1v1h-1zM52 680h1v1h-1zM52 683h1v1h-1zM52 718h1v1h-1zM52 720h1v1h-1zM52 721h1v1h-1zM52 722h1v1h-1zM53 399h1v1h-1zM53 462h1v1h-1zM53 465h1v1h-1zM53 542h1v1h-1zM53 548h1v1h-1zM54 548h1v1h-1zM54 599h1v1h-1zM54 673h1v1h-1zM54 679h1v1h-1zM55 465h1v1h-1zM55 765h1v1h-1zM55 766h1v1h-1zM56 420h1v1h-1zM56 549h1v1h-1zM56 762h1v1h-1zM56 765h1v1h-1zM57 394h1v1h-1zM57 426h1v1h-1zM57 631h1v1h-1zM57 684h1v1h-1zM58 397h1v1h-1zM59 550h1v1h-1zM59 724h1v1h-1zM59 725h1v1h-1zM60 421h1v1h-1zM60 630h1v1h-1zM60 681h1v1h-1zM61 420h1v1h-1zM61 462h1v1h-1zM61 541h1v1h-1zM62 681h1v1h-1zM63 544h1v1h-1zM63 623h1v1h-1zM63 629h1v1h-1zM64 542h1v1h-1zM64 547h1v1h-1zM64 622h1v1h-1zM64 625h1v1h-1zM65 548h1v1h-1zM65 628h1v1h-1zM66 422h1v1h-1zM66 425h1v1h-1zM66 680h1v1h-1zM67 415h1v1h-1zM67 420h1v1h-1zM68 394h1v1h-1zM68 420h1v1h-1zM69 391h1v1h-1zM69 421h1v1h-1zM69 544h1v1h-1zM69 760h1v1h-1zM70 393h1v1h-1zM72 427h1v1h-1zM76 424h1v1h-1zM76 544h1v1h-1zM77 419h1v1h-1zM79 422h1v1h-1zM79 423h1v1h-1zM79 539h1v1h-1zM80 426h1v1h-1z"/><path fill="#7a3410" d="M6 385h1v1h-1zM6 748h1v1h-1zM7 380h1v1h-1zM7 646h1v1h-1zM7 764h1v1h-1zM8 397h1v1h-1zM8 747h1v1h-1zM9 590h1v1h-1zM9 618h1v1h-1zM9 621h1v1h-1zM10 451h1v1h-1zM10 496h1v1h-1zM10 499h1v1h-1zM10 549h1v1h-1zM10 638h1v1h-1zM10 667h1v1h-1zM10 683h1v1h-1zM10 704h1v1h-1zM10 743h1v1h-1zM11 380h1v1h-1zM11 493h1v1h-1zM11 618h1v1h-1zM12 507h1v1h-1zM12 596h1v1h-1zM12 705h1v1h-1zM13 417h1v1h-1zM13 423h1v1h-1zM13 488h1v1h-1zM13 502h1v1h-1zM13 559h1v1h-1zM13 595h1v1h-1zM13 630h1v1h-1zM13 632h1v1h-1zM13 644h1v1h-1zM13 645h1v1h-1zM13 664h1v1h-1zM14 550h1v1h-1zM14 684h1v1h-1zM14 744h1v1h-1zM15 390h1v1h-1zM15 447h1v1h-1zM15 487h1v1h-1zM15 498h1v1h-1zM15 722h1v1h-1zM16 551h1v1h-1zM16 620h1v1h-1zM16 757h1v1h-1zM17 551h1v1h-1zM17 629h1v1h-1zM18 486h1v1h-1zM18 599h1v1h-1zM18 622h1v1h-1zM18 643h1v1h-1zM18 720h1v1h-1zM18 750h1v1h-1zM19 417h1v1h-1zM19 447h1v1h-1zM19 453h1v1h-1zM19 505h1v1h-1zM19 533h1v1h-1zM19 557h1v1h-1zM19 581h1v1h-1zM19 637h1v1h-1zM19 638h1v1h-1zM20 376h1v1h-1zM20 424h1v1h-1zM20 463h1v1h-1zM20 533h1v1h-1zM20 599h1v1h-1zM20 665h1v1h-1zM20 667h1v1h-1zM21 490h1v1h-1zM21 554h1v1h-1zM21 764h1v1h-1zM22 494h1v1h-1zM22 590h1v1h-1zM22 594h1v1h-1zM22 728h1v1h-1zM22 764h1v1h-1zM23 505h1v1h-1zM23 645h1v1h-1zM23 746h1v1h-1zM23 768h1v1h-1zM24 393h1v1h-1zM24 491h1v1h-1zM24 493h1v1h-1zM24 646h1v1h-1zM24 680h1v1h-1zM24 708h1v1h-1zM24 730h1v1h-1zM25 687h1v1h-1zM25 707h1v1h-1zM26 625h1v1h-1zM26 642h1v1h-1zM26 685h1v1h-1zM27 446h1v1h-1zM27 509h1v1h-1zM27 604h1v1h-1zM27 708h1v1h-1zM27 752h1v1h-1zM28 396h1v1h-1zM28 461h1v1h-1zM28 491h1v1h-1zM28 637h1v1h-1zM28 679h1v1h-1zM29 449h1v1h-1zM29 532h1v1h-1zM29 707h1v1h-1zM29 722h1v1h-1zM30 632h1v1h-1zM30 668h1v1h-1zM30 704h1v1h-1zM30 759h1v1h-1zM30 761h1v1h-1zM31 385h1v1h-1zM31 422h1v1h-1zM31 529h1v1h-1zM31 546h1v1h-1zM31 641h1v1h-1zM31 669h1v1h-1zM32 545h1v1h-1zM32 641h1v1h-1zM32 643h1v1h-1zM32 748h1v1h-1zM32 752h1v1h-1zM33 531h1v1h-1zM33 585h1v1h-1zM33 624h1v1h-1zM34 378h1v1h-1zM34 465h1v1h-1zM34 601h1v1h-1zM34 672h1v1h-1zM35 391h1v1h-1zM35 398h1v1h-1zM35 420h1v1h-1zM35 507h1v1h-1zM35 543h1v1h-1zM35 586h1v1h-1zM35 669h1v1h-1zM35 756h1v1h-1zM36 400h1v1h-1zM36 549h1v1h-1zM36 586h1v1h-1zM36 710h1v1h-1zM37 552h1v1h-1zM37 759h1v1h-1zM38 490h1v1h-1zM38 492h1v1h-1zM38 530h1v1h-1zM38 542h1v1h-1zM38 585h1v1h-1zM38 590h1v1h-1zM38 641h1v1h-1zM38 719h1v1h-1zM39 382h1v1h-1zM39 546h1v1h-1zM39 632h1v1h-1zM39 752h1v1h-1zM40 399h1v1h-1zM40 418h1v1h-1zM40 422h1v1h-1zM40 582h1v1h-1zM40 628h1v1h-1zM40 632h1v1h-1zM40 675h1v1h-1zM40 677h1v1h-1zM41 396h1v1h-1zM41 427h1v1h-1zM41 675h1v1h-1zM41 765h1v1h-1zM42 378h1v1h-1zM42 451h1v1h-1zM42 504h1v1h-1zM42 543h1v1h-1zM42 674h1v1h-1zM43 622h1v1h-1zM43 725h1v1h-1zM43 750h1v1h-1zM44 710h1v1h-1zM44 714h1v1h-1zM45 750h1v1h-1zM46 547h1v1h-1zM47 631h1v1h-1zM47 716h1v1h-1zM47 763h1v1h-1zM48 398h1v1h-1zM49 681h1v1h-1zM50 601h1v1h-1zM50 680h1v1h-1zM52 462h1v1h-1zM52 467h1v1h-1zM53 509h1v1h-1zM53 754h1v1h-1zM54 398h1v1h-1zM55 549h1v1h-1zM55 628h1v1h-1zM55 721h1v1h-1zM56 420h1v1h-1zM56 724h1v1h-1zM56 767h1v1h-1zM57 546h1v1h-1zM57 765h1v1h-1zM60 543h1v1h-1zM60 765h1v1h-1zM61 629h1v1h-1zM62 386h1v1h-1zM62 425h1v1h-1zM62 426h1v1h-1zM62 546h1v1h-1zM63 678h1v1h-1zM64 396h1v1h-1zM64 627h1v1h-1zM64 681h1v1h-1zM65 548h1v1h-1zM65 684h1v1h-1zM66 627h1v1h-1zM66 630h1v1h-1zM66 676h1v1h-1zM68 769h1v1h-1zM69 396h1v1h-1zM69 416h1v1h-1zM70 770h1v1h-1zM71 417h1v1h-1zM71 542h1v1h-1zM71 550h1v1h-1z"/></svg>
<div class="a" style="left:317px;top:266px;width:139px;height:509px;border:5px solid #ff0000;border-radius:4px"></div>
<div class="a" style="left:0;top:0;width:1150px;height:779px;border:2px solid #c3c3c3;pointer-events:none"></div>
</body></html>
